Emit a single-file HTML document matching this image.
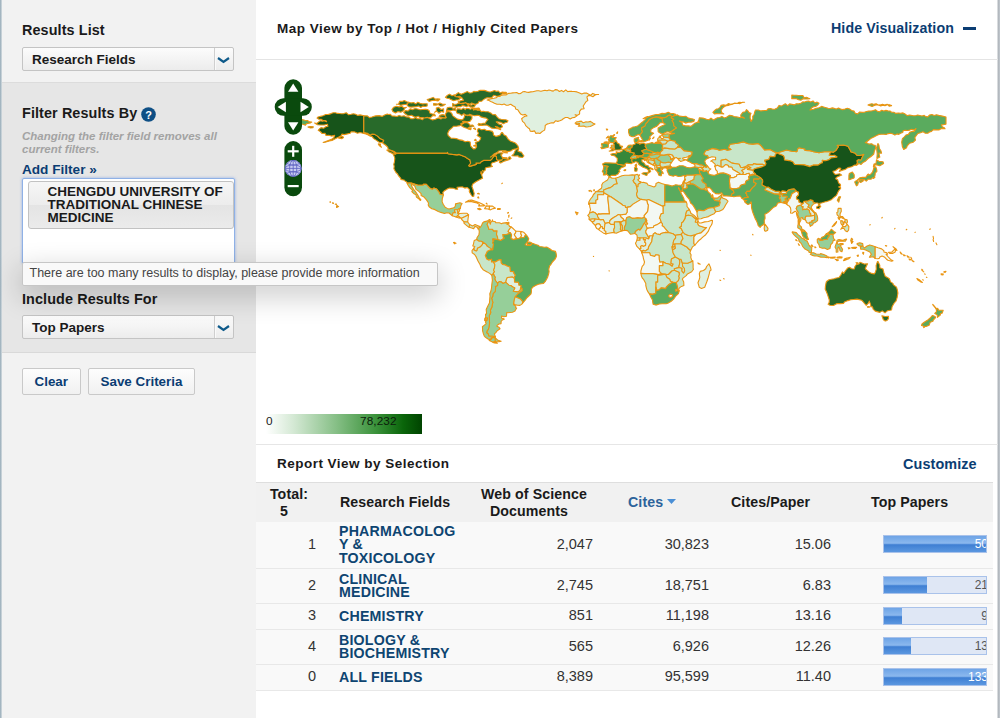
<!DOCTYPE html>
<html lang="en">
<head>
<meta charset="utf-8">
<title>Essential Science Indicators</title>
<style>
*{box-sizing:border-box;margin:0;padding:0}
html,body{width:1000px;height:718px;overflow:hidden;background:#fff}
body{font-family:"Liberation Sans",Arial,sans-serif;color:#222;position:relative;font-size:14px}
.abs{position:absolute}
#leftedge{left:0;top:0;width:2px;height:718px;background:linear-gradient(90deg,#9fb2be 0,#a9bac4 55%,#e9ecee 100%)}
#rightedge{left:997px;top:0;width:3px;height:718px;background:linear-gradient(90deg,#fff 0,#aeb4ba 35%,#c2c8ce 100%)}
#side{left:2px;top:0;width:254px;height:718px;background:#f2f2f2}
#filt{left:2px;top:82px;width:254px;height:271px;background:#e6e6e6;border-top:1px solid #dcdcdc;border-bottom:1px solid #d9d9d9}
.h{font-weight:bold;font-size:14.4px;color:#1a1a1a;white-space:nowrap;letter-spacing:.1px}
.sel{left:22px;width:212px;height:24px;border:1px solid #c4c4c4;border-radius:2px;background:linear-gradient(#fcfcfc,#ececec);font-weight:bold;font-size:13.5px;color:#1a1a1a;line-height:23.5px;padding-left:9px;white-space:nowrap}
.sel i{position:absolute;right:18px;top:0;width:1px;height:22px;background:#cfcfcf;box-shadow:1px 0 0 #fafafa}
.sel svg{position:absolute;right:3px;top:9px}
.note{left:22px;top:130px;width:225px;font-size:11.5px;line-height:13px;font-style:italic;font-weight:bold;color:#a3a3a3}
.lnk{color:#0b3d73;font-weight:bold}
#fbox{left:22px;top:178px;width:213px;height:86px;background:#fff;border:1px solid #8fb1e6;border-radius:2px;box-shadow:0 0 3px rgba(110,150,230,.7)}
#chip{left:28px;top:181px;width:206px;height:48px;border:1px solid #c2c2c2;border-radius:3px;background:linear-gradient(#f6f6f6 0%,#ececec 50%,#e4e4e4 51%,#ebebeb 100%);font-weight:bold;font-size:13.5px;line-height:13.2px;color:#1a1a1a;padding:2.5px 0 0 18.5px}
#tip{left:22px;top:262px;width:416px;height:24px;background:#f9f9f9;border:1px solid #c6c6c6;border-radius:2px;box-shadow:0 9px 28px 2px rgba(0,0,0,.2);font-size:12.5px;line-height:21px;color:#444;padding-left:6.5px;white-space:nowrap}
.btn{top:368px;height:27px;border:1px solid #c9c9c9;border-radius:2px;background:linear-gradient(#fdfdfd,#f1f1f1);font-weight:bold;font-size:13.4px;color:#0b3d73;line-height:25.5px;text-align:center;white-space:nowrap}
#hdrline{left:256px;top:59px;width:742px;height:1px;background:#e4e4e4}
#sepline{left:256px;top:444px;width:742px;height:1px;background:#e6e6e6}
.t13{font-weight:bold;font-size:13.5px;color:#1a1a1a;white-space:nowrap;letter-spacing:.48px}
#thead{left:256px;top:482px;width:737px;height:40px;background:#f1f1f1;border-top:1px solid #dedede}
.th{font-weight:bold;font-size:14.2px;line-height:16.5px;color:#1a1a1a;text-align:center;white-space:nowrap;letter-spacing:.1px}
.row{left:256px;width:737px;background:#f9f9f9;border-bottom:1px solid #e8e8e8}
.num{font-size:14.5px;color:#333;text-align:right;white-space:nowrap;width:80px}
.fld{left:339px;font-weight:bold;font-size:14.2px;line-height:13.6px;color:#0e4571;letter-spacing:.2px}
.bar{left:883px;width:104px;height:18px;background:#dfe7f5;border:1px solid #a9c2ea;overflow:hidden}
.bar b{display:block;height:100%;background:linear-gradient(#6ea4e6 0%,#8bb8ee 45%,#3f7fd3 55%,#5b97e0 100%)}
.bar span{position:absolute;right:-2px;top:0;font-size:12px;line-height:17px;color:#555}
</style>
</head>
<body>
<div class="abs" id="side"></div>
<div class="abs" id="filt"></div>
<div class="abs" id="leftedge"></div>
<div class="abs" id="rightedge"></div>

<div class="abs h" style="left:22px;top:22px">Results List</div>
<div class="abs sel" style="top:47px">Research Fields<i></i><svg width="13" height="7" viewBox="0 0 13 7"><path d="M1 1 L6.5 5 L12 1" fill="none" stroke="#0e5a8a" stroke-width="2.2"/></svg></div>

<div class="abs h" style="left:22px;top:104.5px">Filter Results By</div>
<svg class="abs" style="left:141px;top:106.5px" width="15" height="15" viewBox="0 0 15 15"><circle cx="7.5" cy="7.5" r="7.3" fill="#0e4f85"/><text x="7.5" y="11.6" text-anchor="middle" font-family="Liberation Sans, sans-serif" font-weight="bold" font-size="11" fill="#fff">?</text></svg>
<div class="abs note">Changing the filter field removes all current filters.</div>
<div class="abs lnk" style="left:22px;top:161.5px;font-size:13.6px;white-space:nowrap">Add Filter »</div>
<div class="abs" id="fbox"></div>
<div class="abs" id="chip">CHENGDU UNIVERSITY OF<br>TRADITIONAL CHINESE<br>MEDICINE</div>
<div class="abs h" style="left:22px;top:290.5px">Include Results For</div>
<div class="abs sel" style="top:315px">Top Papers<i></i><svg width="13" height="7" viewBox="0 0 13 7"><path d="M1 1 L6.5 5 L12 1" fill="none" stroke="#0e5a8a" stroke-width="2.2"/></svg></div>
<div class="abs btn" style="left:22px;width:58.5px">Clear</div>
<div class="abs btn" style="left:88px;width:107px">Save Criteria</div>

<div class="abs t13" style="left:277px;top:21px">Map View by Top / Hot / Highly Cited Papers</div>
<div class="abs lnk" style="left:831px;top:20px;font-size:14.2px;white-space:nowrap;letter-spacing:.1px">Hide Visualization</div>
<div class="abs" style="left:963px;top:27px;width:13px;height:3px;background:#0b3d73"></div>
<div class="abs" id="hdrline"></div>

<svg id="map" class="abs" style="left:256px;top:60px" width="741" height="384" viewBox="256 60 741 384"><style>.c0{fill:#f3f8f3}.c1{fill:#e0f0e0}.c2{fill:#c8e6c9}.c3{fill:#96cf99}.c4{fill:#5aab5e}.c5{fill:#36883a}.c6{fill:#286a2a}.c7{fill:#17541a} #map path{stroke:#ea9512;stroke-width:1.1;stroke-linejoin:round}</style><g><path class="c2" d="M608.8,177.1L609.9,176.9L612.2,178.2L615.5,178.3L616.2,179.4L616.4,181.2L617.3,183.8L614.1,184.5L612.8,186L610.4,187.6L608.6,188.1L603.7,189.9L603.7,191.8L595.6,191.8L597.7,191L601.4,188.3L601.9,186.7L601.7,184.9L602.8,182.9L605.7,181.1L607.2,180.3L608.6,178.2Z"><title>MAR</title></path><path class="c2" d="M595.6,191.8L603.7,191.8L603.7,194.8L597.7,194.8L597.7,199.6L595.9,200.3L595.9,203.4L588.7,203.4L588.7,204.3L588.8,202.1L590.5,199L592.5,196.7L593.4,194.5L595,193Z"><title>ESH</title></path><path class="c0" d="M588.7,203.4L595.9,203.4L595.9,200.3L597.7,199.6L597.7,194.8L603.7,194.8L603.7,192.5L610.8,196.7L607.7,196.7L609.3,212.1L609.5,213.9L602.6,213.9L600.1,214.1L598.3,213.9L597.4,215.2L595.2,212.8L593.2,211.9L589.6,213L590.5,209.4L589.8,206.8L589.6,204.5L588.7,204.3Z"><title>MRT</title></path><path class="c2" d="M615.5,178.3L618.4,177.3L621.9,175.8L624.9,175.3L628.6,175.3L632.2,174.9L635.1,175.1L634.6,176.7L634.4,179.1L633.1,180.7L634.6,183.1L635.8,183.8L636.7,187L637.5,191.2L636.5,194.1L637.6,197.6L641.1,199.4L633.1,204.1L630.4,206.6L627.1,207.4L625.5,207.5L625.3,206.1L622.8,205.2L621.7,204.3L610.8,196.7L603.7,192.5L603.7,189.9L608.6,188.1L610.4,187.6L612.8,186L614.1,184.5L617.3,183.8L616.4,181.2L616.2,179.4Z"><title>DZA</title></path><path class="c2" d="M635.1,175.1L637.3,174.3L638.2,175.3L639.6,174.9L638.5,176.7L639.5,178.5L637.8,179.8L639.6,181.6L640.4,181.8L640.4,183.1L638.2,184.3L638,186.7L636.7,187L635.8,183.8L634.6,183.1L633.1,180.7L634.4,179.1L634.6,176.7Z"><title>TUN</title></path><path class="c2" d="M640.4,181.8L642.2,182.5L643.4,182.3L647.1,183.4L648,185L651.2,186L654,187L655.8,185.8L656,183.4L658.5,182.3L661.6,183.4L665,184.5L664.8,187.6L664.8,202.1L664.8,205.7L663,205.7L663,206.6L648.5,199.6L646.7,200.3L641.1,199.4L637.6,197.6L636.5,194.1L637.5,191.2L636.7,187L638,186.7L638.2,184.3L640.4,183.1Z"><title>LBY</title></path><path class="c4" d="M665,184.5L668.5,185L672.1,186.1L673.9,185.4L675.7,184.7L677.5,185L678.1,185.2L681.5,185.2L682.8,188.5L681.5,191.8L680.3,190.9L678.6,187.6L678.6,188.5L680.3,191.2L681.2,193.6L683,196.8L683.9,198.5L684.2,200.3L686.4,202.1L664.8,202.1L664.8,187.6Z"><title>EGY</title></path><path class="c2" d="M664.8,202.1L686.4,202.1L687,203.9L687,206.5L689.3,209.4L688.4,210.3L686.6,211.2L685.7,214.8L685.5,215.9L685.2,218.4L683,222L681.7,222.8L681.3,226.6L679.4,227.5L681.2,228.4L683,232L681.2,234.4L675.7,235.3L675.5,235.7L673,233.8L669.2,232.8L667.6,231.3L665.4,228.8L663.4,226.4L662.1,225.7L662.5,224L661,222.2L660.3,219.1L659.4,218.4L659.9,216.6L661.2,213.5L663,213.5L663,206.6L663,205.7L664.8,205.7Z"><title>SDN</title></path><path class="c0" d="M663,206.6L648.5,199.6L646.7,200.3L647.6,203.9L648.3,205L647.6,211.3L644,215.7L644.2,217.2L645.1,218.2L646,219L646.7,220.2L646.5,222.2L647.6,223.9L645.3,224L647.2,228.4L649.4,228L653.2,227.5L654.1,225.7L657.6,224.4L661,222.2L660.3,219.1L659.4,218.4L659.9,216.6L661.2,213.5L663,213.5Z"><title>TCD</title></path><path class="c0" d="M646.7,200.3L641.1,199.4L633.1,204.1L630.4,206.6L627.1,207.4L627.1,212.3L625.8,214.1L621.3,214.8L619.9,214.8L621.1,217.3L623.3,219L623.9,220.4L626,220.8L626.2,219.1L626.9,217.5L629.5,216.8L632.2,218.4L634.9,218.2L637.6,217.9L642.2,218.2L644.2,217.2L644,215.7L647.6,211.3L648.3,205L647.6,203.9Z"><title>NER</title></path><path class="c1" d="M610.8,196.7L621.7,204.3L622.8,205.2L625.3,206.1L625.5,207.5L627.1,207.4L627.1,212.3L625.8,214.1L621.3,214.8L619.9,214.8L618.2,214.6L615.9,216.2L614.1,217.2L611.5,219L609.9,220.6L609.5,223.1L608.3,222.6L605.2,223.5L604.4,222L603.2,219.5L600.8,219.9L598.8,219.5L598.8,218.4L597.7,217L597.4,215.2L598.3,213.9L600.1,214.1L602.6,213.9L609.5,213.9L609.3,212.1L607.7,196.7Z"><title>MLI</title></path><path class="c2" d="M589.6,213L593.2,211.9L595.2,212.8L597.4,215.2L597.7,217L598.8,218.4L598.8,219.5L594.7,219L592.3,219L589.2,219.5L589,218.2L589.4,217.3L587.8,215.3L588.8,214.4Z"><title>SEN</title></path><path class="c1" d="M589.2,219.5L592.3,219L594.7,219L594.7,220.8L592.3,222Z"><title>GNB</title></path><path class="c1" d="M592.3,222L594.7,220.8L594.7,219L598.8,219.5L600.8,219.9L603.2,219.5L604.4,222L605.2,223.5L604.8,225L604.4,228.2L602.5,228.6L602.3,226.8L600.8,226.6L600.3,225.1L599.2,223.9L597,224L595.4,225.7L594.7,224.8L592.8,223Z"><title>GIN</title></path><path class="c0" d="M595.4,225.7L597,224L599.2,223.9L600.3,225.1L600.8,226.6L600.1,228L598.6,229.5L596.8,228.6L595.6,226.6Z"><title>SLE</title></path><path class="c0" d="M598.6,229.5L600.1,228L600.8,226.6L602.3,226.8L602.5,228.6L604.4,228.2L604.3,230.4L605.9,231.5L605.9,234L603.2,232.9L599.9,230.6Z"><title>LBR</title></path><path class="c1" d="M605.9,234L605.9,231.5L604.3,230.4L604.4,228.2L604.8,225L605.2,223.5L608.3,222.6L609.5,223.1L611,224.4L614.4,224.4L614.6,227.5L613.7,230L614.4,232.8L612.2,232.6L608.6,233.3Z"><title>CIV</title></path><path class="c1" d="M609.5,223.1L609.9,220.6L611.5,219L614.1,217.2L615.9,216.2L618.2,214.6L619.9,214.8L621.1,217.3L623.3,219L623.9,220.4L621.1,222L619.3,221.9L614.4,222L614.4,224.4L611,224.4Z"><title>BFA</title></path><path class="c2" d="M614.4,232.8L613.7,230L614.6,227.5L614.4,224.4L614.4,222L619.3,221.9L620.2,223.3L620.6,226.9L620.4,229.3L621.7,230.9L619.5,231.8L616.2,233.3Z"><title>GHA</title></path><path class="c2" d="M621.7,230.9L620.4,229.3L620.6,226.9L620.2,223.3L619.3,221.9L621.1,222L621,223.9L622.4,225.7L622.4,230.8Z"><title>TGO</title></path><path class="c2" d="M622.4,230.8L622.4,225.7L621,223.9L621.1,222L623.9,220.4L626,220.8L626,223.9L624.4,227.5L624.4,230.4Z"><title>BEN</title></path><path class="c3" d="M624.4,230.4L624.4,227.5L626,223.9L626,220.8L626.2,219.1L626.9,217.5L629.5,216.8L632.2,218.4L634.9,218.2L637.6,217.9L642.2,218.2L644.2,217.2L645.1,218.2L646,219L645.3,219.5L646,221.1L643.4,224.6L642.7,226.2L641.3,228.4L640,230.2L638.5,229.3L637.1,230.2L635.5,231.5L634.9,233.5L632.2,234L630.4,234.2L628.6,232L627.5,230.6L625.7,230.4Z"><title>NGA</title></path><path class="c2" d="M634.9,233.5L635.5,231.5L637.1,230.2L638.5,229.3L640,230.2L641.3,228.4L642.7,226.2L643.4,224.6L646,221.1L645.3,219.5L646,219L646.7,220.2L646.5,222.2L647.6,223.9L645.3,224L647.2,228.4L645.8,231.1L646,232.9L648.3,236.6L648.9,238L648.7,238.9L645.8,238L643.6,238L640,238L637.3,237.8L637.1,235.7L636.7,234.7Z"><title>CMR</title></path><path class="c1" d="M637.3,237.8L640,238L640,240.2L636.9,240.2Z"><title>GNQ</title></path><path class="c1" d="M636.9,240.2L640,240.2L640,238L643.6,238L643.4,239.6L645.6,239.6L644.7,242L645.8,243.1L645.6,245.4L643.1,246.4L642.2,245.6L640.5,246.5L641.1,248.3L639.6,249.1L636.9,246.4L635.5,243.3L636.4,241.5Z"><title>GAB</title></path><path class="c1" d="M639.6,249.1L641.1,248.3L640.5,246.5L642.2,245.6L643.1,246.4L645.6,245.4L645.8,243.1L644.7,242L645.6,239.6L643.4,239.6L643.6,238L645.8,238L648.7,238.9L648.9,238L649.6,235.7L653.2,235.7L652.3,237.6L651.8,241.5L650.3,244L648.5,247.1L648.3,249.1L647.1,249.8L645.6,250.9L643.8,250.7L643.1,250.3L642.4,251.1L641.3,251.1Z"><title>COG</title></path><path class="c0" d="M647.2,228.4L649.4,228L653.2,227.5L654.1,225.7L657.6,224.4L661,222.2L662.5,224L662.1,225.7L663.4,226.4L665.4,228.8L667.6,231.3L669.2,232.8L665.7,232.4L663.8,232.8L661,233.5L660.1,234.6L656.9,234L654.9,232.8L653.2,234.2L653.2,235.7L649.6,235.7L648.9,238L648.3,236.6L646,232.9L645.8,231.1Z"><title>CAF</title></path><path class="c2" d="M641.6,252.5L642.4,251.1L643.1,250.3L643.8,250.7L645.6,250.9L647.1,249.8L648.3,249.1L648.5,247.1L650.3,244L651.8,241.5L652.3,237.6L653.2,235.7L653.2,234.2L654.9,232.8L656.9,234L660.1,234.6L661,233.5L663.8,232.8L665.7,232.4L669.2,232.8L673,233.8L675.5,235.7L675.7,237.8L673.7,240.5L673.2,242.9L673.2,244.5L672.1,246.9L672.5,250L673.2,252.9L675.4,257.1L671.4,259L671,263.4L673.2,264.1L672.1,266.3L669.4,264.3L665.7,263.2L663,261.8L659.9,262.3L659.2,259.2L659,255.2L655.8,254.7L654.7,256.5L650.3,255.2L649.6,252.7L643.1,252.7L641.8,252.9Z"><title>COD</title></path><path class="c0" d="M641.8,252.9L643.1,252.7L649.6,252.7L650.3,255.2L654.7,256.5L655.8,254.7L659,255.2L659.2,259.2L659.9,262.3L663,261.8L663,265.6L659.4,265.6L659.4,271.4L661.9,273.9L658.3,274.6L653.1,273.6L644.9,273.6L640.9,273.4L640.9,271L641.6,268.3L642.2,266.3L643.8,264.7L644.5,262L643.4,258.3L643.1,256.5ZM641.3,251.1L642.4,251.1L641.6,252.5Z"><title>AGO</title></path><path class="c2" d="M659.4,265.6L663,265.6L663,261.8L665.7,263.2L669.4,264.3L672.1,266.3L673.2,264.1L671,263.4L671.4,259L675.4,257.1L679.2,259L679.9,261.6L679.4,264.7L678.8,266.7L679.7,267.4L674.3,268.8L674.6,270.3L671.9,271L668.5,274.5L665.4,274.3L661.9,273.9L659.4,271.4Z"><title>ZMB</title></path><path class="c2" d="M665.4,274.3L668.5,274.5L671.9,271L674.6,270.3L676.3,271L679.2,272.3L679.4,274.6L678.8,276.5L679.4,277.9L678.4,280.6L676.3,282.6L672.8,282.3L670.3,281.2L669.7,279.2L667,277.5Z"><title>ZWE</title></path><path class="c2" d="M665.4,274.3L667,277.5L669.7,279.2L670.3,281.2L672.8,282.3L668.5,284.8L666.5,286.8L665.7,288.6L661.2,287.9L659.4,289.7L657,290.6L655.8,287L655.8,281.9L657.6,281.9L657.6,275.2L661.8,274.6L663.9,274.5Z"><title>BWA</title></path><path class="c2" d="M640.9,273.4L644.9,273.6L653.1,273.6L658.3,274.6L661.9,273.9L665.4,274.3L663.9,274.5L661.8,274.6L657.6,275.2L657.6,281.9L655.8,281.9L655.8,287L655.8,293.5L652.1,294.4L651.1,294.1L649.4,293.9L648,291.9L646.7,289.2L645.8,285.5L645.8,283.5L643.8,279.7L642.2,277.9L641.3,275.6Z"><title>NAM</title></path><path class="c4" d="M649.4,293.9L651.1,294.1L652.1,294.4L655.8,293.5L655.8,287L657,290.6L659.4,289.7L661.2,287.9L665.7,288.6L666.5,286.8L668.5,284.8L672.8,282.3L676.3,282.6L677.5,286.4L677.5,289L677.5,290.6L679.2,290.8L678.4,293.7L675.7,296.2L673.9,298.8L671.2,301.3L668.5,302.9L666.1,303.7L662.1,303.8L659.4,304L655.8,305.1L653.1,304.2L652.7,301.9L652.5,300L650.9,297.3Z"><title>ZAF</title></path><path class="c0" d="M668.5,295.7L670.3,294.1L672.6,294.8L672.5,296.4L670.6,297.5L669.2,297Z"><title>LSO</title></path><path class="c2" d="M675.7,289.2L677.5,289.2L677.5,290.6L675.7,291.3L675.4,290.2Z"><title>SWZ</title></path><path class="c2" d="M679.2,290.8L677.5,290.6L677.5,289L677.5,286.4L676.3,282.6L678.4,280.6L679.4,277.9L678.8,276.5L679.4,274.6L679.2,272.3L676.3,271L674.6,270.3L674.3,268.8L679.7,267.4L682.1,268.3L681.9,271L683.5,273L684.6,271L684.4,268.5L682.6,266.5L682.3,263L683,263L687.5,263.2L689.3,262.5L692.8,261L693.1,264.7L693.1,268.3L693.5,269.2L691.7,271.7L687.5,273.9L686.2,275.6L683,278.1L682.4,279.2L683.7,281.9L683.9,285.5L681.5,286.4L679.4,287.9L678.6,289.2Z"><title>MOZ</title></path><path class="c2" d="M679.7,267.4L678.8,266.7L679.4,264.7L679.9,261.6L679.2,259L681,259.2L682.3,263L682.6,266.5L684.4,268.5L684.6,271L683.5,273L681.9,271L682.1,268.3Z"><title>MWI</title></path><path class="c2" d="M692.8,261L689.3,262.5L687.5,263.2L683,263L682.3,263L681,259.2L679.2,259L675.4,257.1L673.2,252.9L672.5,250L675.4,248L674.8,246.4L674.8,243.8L681,243.8L687.7,247.4L687.9,248.3L690.6,250.5L689.9,252.9L691.1,254.7L690.8,257.4L691.7,260.1Z"><title>TZA</title></path><path class="c2" d="M672.1,246.9L673.2,244.5L674.8,243.8L674.8,246.4L673.7,247.1Z"><title>RWA</title></path><path class="c2" d="M672.1,246.9L673.7,247.1L674.8,246.4L675.4,248L672.5,250Z"><title>BDI</title></path><path class="c2" d="M673.2,244.5L673.2,242.9L673.7,240.5L675.7,237.8L675.5,235.7L675.7,235.3L681.2,234.4L681.9,235.3L683,238.6L682.1,240L681.2,241.6L681,243.8L674.8,243.8Z"><title>UGA</title></path><path class="c2" d="M681,243.8L681.2,241.6L682.1,240L683,238.6L681.9,235.3L681.2,234.4L683,232L684.8,234L688.4,235.5L691.1,235.8L693.9,234.9L695.5,234.9L693.9,236.9L693.9,242L693.9,243.5L694.9,245.1L692.4,246.9L691.3,249.3L690.6,250.5L687.9,248.3L687.7,247.4Z"><title>KEN</title></path><path class="c2" d="M685.5,215.9L688.2,215L690.2,215.5L692,215.7L693.9,217.5L696.4,219.3L695.3,222L697.3,222.2L698.4,225L699.3,225.7L704.7,227.5L706.6,227.5L701.1,232.9L698.4,233.5L695.7,234.4L695.5,234.9L693.9,234.9L691.1,235.8L688.4,235.5L684.8,234L683,232L681.2,228.4L679.4,227.5L681.3,226.6L681.7,222.8L683,222L685.2,218.4Z"><title>ETH</title></path><path class="c2" d="M689.3,209.4L688.4,210.3L686.6,211.2L685.7,214.8L685.5,215.9L688.2,215L690.2,215.5L692,215.7L693.9,217.5L696.4,219.3L697.7,219L695.7,217L693.9,215.2L692,213.9L691.1,213.7L690.2,211.2Z"><title>ERI</title></path><path class="c1" d="M697.7,219L696.4,219.3L695.3,222L697.3,222.2L698,221.1Z"><title>DJI</title></path><path class="c0" d="M698,221.1L697.3,222.2L698.4,225L699.3,225.7L704.7,227.5L706.6,227.5L701.1,232.9L698.4,233.5L695.7,234.4L695.5,234.9L693.9,236.9L693.9,242L693.9,243.5L694.9,245.1L697.5,242L699.2,240.2L701.1,238.7L703.3,236.6L705.7,234.7L708.4,231.1L709.8,227.5L711.6,224.8L712.2,223L712.5,220.6L711.6,220.2L708.4,221.5L704.7,221.9L701.1,223L699.3,223Z"><title>SOM</title></path><path class="c1" d="M708.9,263.8L710.5,267.4L711.1,270.1L709.8,271L709.3,273.7L708,278.3L706.9,281.5L705.7,284.6L704.7,287.3L701.5,288.4L699.3,287.3L698,282.8L699.3,279.2L699.8,277.4L699.3,273.7L700.2,271.4L703.5,270.5L705.7,268.8L706.6,266.5Z"><title>MDG</title></path><path class="c0" d="M575.4,211.9L576.9,214.8L578.1,212.8Z"><title>CPV</title></path><path class="c0" d="M697.9,262.9L700.2,264.3L698.4,263.8ZM719.8,280.1L720.7,280.5ZM723.6,278.6L724.2,279Z"><title>COM</title></path><path class="c4" d="M666.7,168L667.7,167.1L666.7,166.4L670.3,165.8L672.1,167.3L669.4,167.6L667,168.9ZM667,170.4L667.9,172.4L669,174.9L670.6,175.4L673.4,176.3L675,175.3L678.4,176.5L681.2,176.2L684.8,175.3L684.6,176.9L686.1,176.3L686.1,175.3L688.4,175.3L692,175.3L696.4,174.7L700.8,174.5L699.7,172.4L699.3,170.5L700.8,170L698.8,169.3L698.4,167.5L694.8,166.7L691.5,167.6L689,167.8L686.6,167.3L683,165.8L679.4,165.8L676.6,167.1L672.1,167.3L670.3,168.7L667.9,168.7Z"><title>TUR</title></path><path class="c1" d="M684.6,176.9L686.1,176.3L686.1,175.3L688.4,175.3L692,175.3L696.4,174.7L694.4,176L693.9,179.6L689.9,181.4L686.2,183.4L684.4,182.7L684.1,181.6L685.5,179.2L684.8,179.2Z"><title>SYR</title></path><path class="c3" d="M683.2,182L684.1,181.6L685.5,179.2L684.8,179.2Z"><title>LBN</title></path><path class="c3" d="M681.5,185.2L682.8,188.5L683.7,185.8L683.9,183.2L684.4,182.7L684.1,181.6L683.2,182L682.4,184Z"><title>ISR</title></path><path class="c2" d="M682.8,188.5L684.8,189L687.5,187.6L686.6,184.9L690.2,184L690.6,183.6L689.9,181.4L686.2,183.4L684.4,182.7L683.9,183.2L683.7,185.8Z"><title>JOR</title></path><path class="c3" d="M696.4,174.7L700.8,174.5L702,176.7L703.3,178.3L701.8,180.3L702.9,182.1L706.2,184.3L706,185.8L707.6,187.8L706.4,187.6L706,187.4L704,189.2L700.6,189L695.7,185.6L692.8,184.1L690.6,183.6L689.9,181.4L693.9,179.6L694.4,176Z"><title>IRQ</title></path><path class="c2" d="M704,189.2L706,187.4L706.4,187.6L707.3,190.3L705.7,190.3Z"><title>KWT</title></path><path class="c4" d="M682.8,188.5L684.8,189L687.5,187.6L686.6,184.9L690.2,184L692.8,184.1L695.7,185.6L700.6,189L704,189.2L705.7,190.3L707.3,190.3L708.4,192.1L710.5,193.9L711.6,197L713.1,197.9L714.9,200.5L719.4,201L720.3,202.1L719.3,205.7L713.8,207.5L708.4,208.3L706.9,209L703.8,210.8L700.2,210.4L698,210.4L697.1,212.3L695.7,209.7L693.9,206.6L692.5,204.6L690.6,203L689.3,199.4L687,196.7L685.7,194.8L683.9,192.1L682.3,191Z"><title>SAU</title></path><path class="c2" d="M697.1,212.3L698,210.4L700.2,210.4L703.8,210.8L706.9,209L708.4,208.3L713.8,207.5L715.8,211.7L714.2,213.7L711.2,215L708.4,216.6L705.9,217.3L703.5,217.8L701.1,218.8L698.4,219L697.9,217.5L697.1,214.8Z"><title>YEM</title></path><path class="c2" d="M715.8,211.7L713.8,207.5L719.3,205.7L720.3,202.1L719.4,201L720.7,198.1L721.8,196.8L722.5,197.9L725.8,199.2L728,201.2L725.6,205L724.3,207.5L722.9,209.4L719.3,211.2ZM721.2,194.8L721.8,194.3L721.8,195.6Z"><title>OMN</title></path><path class="c3" d="M713.1,197.9L714.9,200.5L719.4,201L720.7,198.1L721.8,196.8L721.2,194.8L719.8,196.1L717.4,198.1L714.9,198.1Z"><title>ARE</title></path><path class="c3" d="M711.6,197L711.6,195.6L712.5,194.7L713.1,196.3L712.7,197.4Z"><title>QAT</title></path><path class="c4" d="M700.8,170L699.3,170.5L699.7,172.4L700.8,174.5L702,176.7L703.3,178.3L701.8,180.3L702.9,182.1L706.2,184.3L706,185.8L707.6,187.8L709.3,187.4L711.6,189.6L712.9,191.6L715.6,193.6L718.9,193.9L721.6,192.8L722.9,194.8L723.4,195.9L726.5,195.9L731.2,196.3L731.6,194.3L734.1,192.7L733.4,190.7L730.1,188L730,184.9L729.4,181.1L730.1,177.4L730.5,175.6L727.1,174L723.4,172.7L720.2,173.1L717.3,174.3L713.8,175.4L711.1,174.9L708.4,173.8L708.2,172.4L706.6,170.5L703.8,171.4Z"><title>IRN</title></path><path class="c2" d="M692,163.3L696.6,163.6L699.3,164.7L702,164.9L703.8,166L703.7,167.5L701.1,167.3L698.4,167.5L694.8,166.7L695.1,165.6L693.9,164Z"><title>GEO</title></path><path class="c2" d="M698.4,167.5L701.1,167.3L702.2,168.4L703.8,170.4L703.8,171.4L702.6,170.4L700.8,170L698.8,169.3Z"><title>ARM</title></path><path class="c2" d="M703.8,166L706.2,167.3L707.6,166.2L709.3,168.4L710.9,168.9L708.9,170.7L708.2,172.4L706.6,170.5L703.8,171.4L703.8,170.4L702.2,168.4L701.1,167.3L703.7,167.5Z"><title>AZE</title></path><path class="c2" d="M708.4,158L707.5,155.8L704.7,154.9L703.8,154L704.7,152.2L705.7,150.8L707.8,150.2L712,148.4L716.5,149.1L719.3,150.2L724.7,149.3L727.4,150.2L731,149.5L728.3,147.7L730.1,144.2L737.4,143.3L743.7,141.9L748.3,143.7L752.8,144.1L758.2,143.5L760.8,145.3L764.6,149.9L770,149.5L774.6,152L777.8,152.8L775.5,154.2L774.9,156.8L770,156.4L768.8,159.5L764.6,160.4L766,163.8L765,165.5L762.8,164.4L756.8,164.4L753.7,163.6L752.8,164.9L748.3,164.7L747.4,165.8L744.6,167.1L742.8,167.6L740.5,167.3L739.2,164.2L731.9,163.1L725.8,159.3L721.1,160.4L721.1,167.1L717.4,165.3L714.7,166.4L715.3,164.4L712,161.3L710.7,161.1L712.9,159.8L715.6,159.8L715.6,157.3L712,156.8Z"><title>KAZ</title></path><path class="c2" d="M721.1,160.4L725.8,159.3L731.9,163.1L739.2,164.2L740.5,167.3L742.8,167.6L744.6,167.1L747.4,165.8L751,167.8L748.3,169.1L747.4,167.6L745.2,168L744.6,169.1L741.7,170.4L743.6,172.7L742.5,174.5L740.1,174.2L738.5,172.7L732.9,169.5L731.8,167.3L728.5,166.9L728.3,165.5L725.6,164.6L722.9,167.1L721.1,167.1Z"><title>UZB</title></path><path class="c0" d="M714.7,166.4L717.4,165.3L721.1,167.1L722.9,167.1L725.6,164.6L728.3,165.5L728.5,166.9L731.8,167.3L732.9,169.5L738.5,172.7L740.1,174.2L737,174.7L736.5,176.2L733.4,177.8L730.1,177.4L730.5,175.6L727.1,174L723.4,172.7L720.2,173.1L717.3,174.3L717.3,171.3L715.6,169.5L715.3,167.6Z"><title>TKM</title></path><path class="c2" d="M765,165.5L762.8,164.4L756.8,164.4L753.7,163.6L752.8,164.9L748.3,164.7L747.4,165.8L751,167.8L748.3,169.1L747.4,169.5L753.2,170.4L753.5,169.5L755.3,168.5L759,167.6L761.7,166.9Z"><title>KGZ</title></path><path class="c1" d="M742.5,174.5L743.6,172.7L741.7,170.4L744.6,169.1L745.2,168L747.4,167.6L748.3,169.1L747.4,169.5L753.2,170.4L753.5,172.2L755.5,174L755.3,174.5L752.4,174.3L749.4,175.4L749.2,173.3L746.8,173.8L745.6,174.5Z"><title>TJK</title></path><path class="c0" d="M730.1,177.4L733.4,177.8L736.5,176.2L737,174.7L740.1,174.2L742.5,174.5L745.6,174.5L746.8,173.8L749.2,173.3L749.4,175.4L752.4,174.3L755.3,174.5L750.1,175.6L748.6,176.7L749.2,178.5L748.5,180L746.5,180.5L745.6,182L745.2,184.1L742.8,184.5L740.5,185.4L739.7,187.8L735.6,188.7L732.9,188.7L730.1,188L730,184.9L729.4,181.1Z"><title>AFG</title></path><path class="c4" d="M731.2,196.3L731.6,194.3L734.1,192.7L733.4,190.7L730.1,188L732.9,188.7L735.6,188.7L739.7,187.8L740.5,185.4L742.8,184.5L745.2,184.1L745.6,182L746.5,180.5L748.5,180L749.2,178.5L748.6,176.7L750.1,175.6L755.3,174.5L757,175.4L760.6,177.6L758.8,179.1L753.7,179.1L753.7,182.1L756.3,183.4L754.8,185.8L752.6,187.6L751,189.6L749.9,191.4L747.2,191.2L745.6,193L746.8,193.9L746.6,195.4L748.5,197.2L744.3,197.9L743.2,199L741.9,198.5L741,197L740.1,195.9L736.5,196.3L733.9,196.7Z"><title>PAK</title></path><path class="c4" d="M743.2,199L744.3,197.9L748.5,197.2L746.6,195.4L746.8,193.9L745.6,193L747.2,191.2L749.9,191.4L751,189.6L752.6,187.6L754.8,185.8L756.3,183.4L753.7,182.1L753.7,179.1L758.8,179.1L760.6,177.6L762.6,179.8L762.8,182.1L762.2,182.9L762.2,184.9L766.6,187.2L764.8,189.8L770.6,192.3L773.7,193.6L779.3,194.1L779.3,191.4L780.7,192.5L782.4,193.6L786.4,193.4L786.5,192.1L788.2,190.1L791.8,189L794,188.7L796,190.7L795.4,191.8L794,192.5L792,193.8L791.1,196.3L790,198.7L788.7,198.5L788.9,200.1L787.4,202.1L786.9,199.9L785.6,200.3L784.9,199L786.2,197.9L787.1,196.8L786.4,196.3L782.4,196.1L782.4,194.8L779.8,193.9L779.3,195.2L780.7,196.3L779.3,197.6L780.7,199.9L781.1,202.5L779.5,202.6L777.3,203.2L777.1,204.5L776.2,205.9L773.7,207.2L771.9,208.8L768.8,211.9L766.8,213.2L764.8,214.3L765.1,218.2L764.2,220.6L764.4,223.3L762.8,225.1L761.3,225.9L760.1,227.3L758.2,225.7L757.7,223.9L756.4,220.6L755.2,218.6L753.7,214.8L752.4,211.2L751.5,207.5L751.4,203.7L751,201.7L750.3,203.5L747.9,204.5L745,202.3L744.5,201.6L746.8,200.5L745,200.6L743.7,199.9Z"><title>IND</title></path><path class="c2" d="M764.8,189.8L766.6,187.2L768.2,187L771.9,189.6L775.5,191.2L779.3,191.4L779.3,194.1L773.7,193.6L770.6,192.3Z"><title>NPL</title></path><path class="c1" d="M780.7,192.5L782.4,193.6L786.4,193.4L786.5,192.1L785.5,191.2L782.7,190.7L781.8,191Z"><title>BTN</title></path><path class="c3" d="M781.1,202.5L780.7,199.9L779.3,197.6L780.7,196.3L779.3,195.2L779.8,193.9L782.4,194.8L782.4,196.1L786.4,196.3L787.1,196.8L786.2,197.9L784.9,199L785.6,200.3L786.9,199.9L787.4,202.1L783.3,202.3L784.2,201.2L786,201.6L786.9,204.5L786.9,203.9Z"><title>BGD</title></path><path class="c2" d="M764.4,224.4L765,224.2L766.8,226.6L768,228.4L767.7,230.2L765.7,231.3L764.6,230.8L764.2,228.4L764.4,226.6Z"><title>LKA</title></path><path class="c0" d="M786.9,204.5L786.9,203.9L787.4,202.1L788.9,200.1L788.7,198.5L790,198.7L791.1,196.3L792,193.8L794,192.5L795.4,191.8L796,190.7L797.4,191.9L798.5,192.1L798.5,195L796.5,197L796.5,198.7L798.9,199.9L799.1,202.1L801.1,203L803,203.5L801.1,205.2L800,205.2L797.2,206.3L796.2,208.4L796.9,209.9L798.3,212.4L797.6,214.4L799.4,218.4L799.2,220.8L798.5,223.1L798.3,223.9L798.1,221.1L798.3,219.3L797.2,216.6L796.5,213.9L796.5,212.1L795.1,211.2L793.6,212.3L792.3,213.3L790.5,213L790.9,210.3L790.5,207.9L789.3,206.1L788.2,205.5Z"><title>MMR</title></path><path class="c3" d="M798.3,223.9L798.5,223.1L799.2,220.8L799.4,218.4L797.6,214.4L798.3,212.4L796.9,209.9L796.2,208.4L797.2,206.3L800,205.2L801.1,205.2L802,206.6L803.2,206.6L802.7,209.7L804.7,209L805.6,209.5L807,208.6L809.4,210.3L809.6,212.3L810.8,213.9L811,215.7L810.3,216.1L806.3,216.2L805.4,217.3L805.2,219.5L806.1,220.8L804.9,219.7L802.7,219L802.5,217.5L800.9,217.7L800.9,220.2L799.4,223L799.4,225.1L801.4,226.8L801.8,228.9L804.1,230.2L804.7,230.8L802.9,231.7L801.4,230L801.1,230.4L800.3,229.3L797.8,227.7L797.8,225.7Z"><title>THA</title></path><path class="c1" d="M801.1,205.2L803,203.5L804,201.2L804.9,201.4L806.1,202.6L808.1,204.1L809.2,205L807.9,207L809.9,208.1L812.7,211.2L814.5,213L814.7,214.8L814.5,215.3L811.8,215.9L810.3,216.1L811,215.7L810.8,213.9L809.6,212.3L809.4,210.3L807,208.6L805.6,209.5L804.7,209L802.7,209.7L803.2,206.6L802,206.6Z"><title>LAO</title></path><path class="c3" d="M804.9,201.4L806.3,201L808.1,201L810.5,199.7L813,200.6L813,202.1L815.4,203L813.2,204.3L811.8,205.9L811.2,207.9L812.7,210.1L814.5,212.1L815.9,213L817.2,215.7L817.7,218.4L817.6,220.6L815.4,222.4L813.6,223.1L813,223.9L812.7,224.8L810.3,226.4L809.6,224.2L809,223.1L810.1,222L812.1,222L811.6,220.8L814.5,219.7L814.5,215.3L814.7,214.8L814.5,213L812.7,211.2L809.9,208.1L807.9,207L809.2,205L808.1,204.1L806.1,202.6L804.9,201.4Z"><title>VNM</title></path><path class="c1" d="M806.1,220.8L805.2,219.5L805.4,217.3L806.3,216.2L810.3,216.1L811.8,215.9L814.5,215.3L814.5,219.7L811.6,220.8L812.1,222L810.1,222L809,223.1L807.4,223L806.3,222Z"><title>KHM</title></path><path class="c4" d="M801.1,230.4L801.4,230L802.9,231.7L804.7,230.8L807,233.3L807,235.7L808.5,239.5L807.2,239.6L804.5,238L803.2,236.7L802.3,234.7L801.6,232.4ZM818.3,238.4L820.8,239.3L821.5,237.6L824.4,236.2L826.3,233.8L828.1,232.9L829.9,231.1L831.3,229.3L833,230.6L833.7,231.5L835.7,232.4L834.2,233.8L832.8,234.4L829.5,234.2L829,236.6L827.7,238L827.5,239.3L824.4,239.5L822.6,240.2L819.9,240.4Z"><title>MYS</title></path><path class="c3" d="M818.3,238.4L819.9,240.4L822.6,240.2L824.4,239.5L827.5,239.3L827.7,238L829,236.6L829.5,234.2L832.8,234.4L833.3,236.6L833.5,238.4L835.1,240.2L833.2,240.5L832.6,242.9L830.8,244.7L830.4,246.5L829.9,248.5L827.4,249.4L824.4,248L822.3,248.2L819.6,247.3L819,244.7L817.4,242.5L817.2,239.6ZM792.3,231.8L796.3,232.6L797.8,234.4L800.5,236.6L801.6,238L803.4,238.7L805.4,240.2L807.2,241.3L807.8,242.5L809,245.1L809.9,246.4L811.8,247.4L811.6,250.2L811.4,252.5L809.2,252.5L808.7,251.1L805,249.1L802.7,246.5L801.4,243.6L799.2,241.5L798.5,238.9L795.8,236.6L793.8,234.6L792.2,232.4ZM810.3,254.3L811.8,252.7L813.6,252.7L816.3,254L819.9,254.3L820.6,253.6L823.7,254.5L827,256.1L827.2,257.8L824.4,257.2L820.8,257.1L817.2,256L814.5,256L812.5,255.4ZM828.1,256.9L829.3,257.2L828.4,258ZM829.9,257.2L831.2,257.4L830.3,258.1ZM831.3,257.4L835.3,257.1L834.4,258L831.7,258.3ZM837,257.4L839.6,256.8L842.2,257.1L841.7,258L837.1,258ZM843.5,260.7L844.4,259L846.2,258.3L846,259.8L844.4,260.5ZM835.3,259.4L838.6,260L837.1,260.7ZM837.1,240.2L839,239.6L842.6,240.4L845.3,239.3L846.6,239.1L845.3,241.1L842.6,241.3L839,241.1L837.5,242L837.1,243.6L838.8,244.5L839.9,243.6L843.1,243.6L843.3,244.2L840.4,245.3L841.3,247.4L842.6,249.3L841.9,251.8L840,250.7L839.7,249.1L838.8,247.4L839,246.9L837.9,247.4L837.9,250.2L837.9,252L836.2,252.2L836.2,249.3L835,247.1L835.9,244.4L836.8,242ZM850.7,240.4L851.5,238.2L852.7,239.3L851.7,241.1L853.1,241.5L851.7,243.5ZM851.7,247.6L854.2,247.3L856.7,247.4L855.3,248.5L852,248.3ZM848.2,247.8L850.2,248L848.9,248.9ZM857.1,243.5L859.8,242.7L862.7,243.6L863.1,246.5L864.3,248L867.1,246L869.8,244.9L872.5,245.8L875.2,246.7L875.2,258.5L873.1,256.7L870.2,257.2L869.4,257.2L870.7,255.1L871.4,254.3L869.8,252L866.2,250.2L863.4,249.3L860.7,249.3L860.4,247.1L862.4,246L859.3,246L857.1,244.4ZM862.9,252.2L863.8,252.5L863.4,254.3L862.7,253.2ZM857.1,255.6L858.4,255.1L858,256.5ZM811.8,244.9L813,246.5L811,245.8ZM814.8,246.7L815.9,247.4L815,247.8ZM796,239.5L797.1,240.9L795.6,240ZM798.3,243.8L799.6,245.3L798.9,245.1Z"><title>IDN</title></path><path class="c1" d="M846.2,258.3L850.4,257.2L848.9,258.7L846,259.8Z"><title>TLS</title></path><path class="c2" d="M826.3,233.8L828.1,232.9L828.6,234L827.4,234.7Z"><title>BRN</title></path><path class="c2" d="M838.2,208.4L841.1,208.4L841.3,211.2L840,213.9L840.2,216.2L842.6,216.6L844.6,219.1L843.1,218.4L841.7,217.7L839,217L838.2,215.7L837.1,214.8L836.8,212.4L837.9,211.9L837.9,210.3ZM837.9,217.7L839.9,218.1L839.3,219.7ZM832.1,226.8L834.5,225.2L836.2,223L836.6,221.5L834.4,223.9ZM840.8,220.6L842.8,221.1L843.1,223.9L842.6,225.5L841.5,224.4L840.8,223ZM844.9,219.3L847.1,219.9L847.5,222L846.6,223.5L845.1,222.4ZM840.8,229.3L842.6,226.6L845.3,226.6L847.1,224.2L848.9,226.6L848.6,230.2L847.1,231.8L845.3,230.8L844,228.4L841.7,228.2ZM843.3,223L844.4,221.7L843.7,224.6Z"><title>PHL</title></path><path class="c4" d="M839,196.7L840.6,196.7L839.5,199.3L838.8,202.1L837.3,200.3Z"><title>TWN</title></path><path class="c4" d="M855.3,181.2L857.1,180.5L858.5,182.1L857.6,185L856.4,185.8L855.6,184L854.7,182.1ZM859.8,180.3L863.4,179.8L863.1,181.1L860.7,182.5L859.5,181.8ZM856.9,180.3L859.8,177.8L862.5,177.4L865.8,177.4L867.6,174.5L868.5,174L868,175.3L870.7,174.2L872.5,172.2L873.4,169.5L874,167.3L875.8,166.9L876.7,169.5L876.9,171.3L875.2,173.1L875.1,175.1L874.5,176.7L874.9,177.3L873.4,178.5L873.1,177.4L871.2,179.1L869.8,179.2L868,179.2L867.6,179.8L866.2,181.2L864.5,179.8L862.5,179.2L859.8,179.8L857.1,180.5ZM873.4,166.7L874,164L876,163.5L876.5,159.8L878.9,161.3L883,161.7L883.6,163.5L879.8,165.8L876.1,164.7L874.9,164.9L874.1,166.7Z"><title>JPN</title></path><path class="c4" d="M849.3,173.4L852.4,172L854.2,174.9L854.2,177.6L853.5,178.3L851.1,179.1L848.8,179.6L848.9,177.4L848.9,175.6Z"><title>KOR</title></path><path class="c2" d="M777.8,152.8L781.8,151.5L786.4,150L791.8,151.3L796.9,151.7L797.8,148.6L799.1,147.7L804.9,149L805,150.4L809.9,150.6L813.6,151.7L819,152.8L824.4,151.7L831.2,151.7L829.9,153.5L829.2,155.1L832.4,155.5L834.4,155.3L837,156.8L836.6,157.3L831,158L829,159.7L825.5,160.7L822.3,160.4L822.5,162.7L820.8,163.3L818.1,165.1L813.6,165.1L809.9,166.6L804.1,164.9L800.9,164.7L794.5,164.4L792.7,161.8L789.1,160.6L784.4,160L784.5,158.6L783.6,155.8L779.1,154Z"><title>MNG</title></path><path class="c7" d="M856.4,165.1L857.5,163.1L857.1,160.7L858.5,159.8L860.9,160.2L862.5,156.8L863.8,154.4L859.8,155.5L857.1,155.5L855.3,153.3L850.7,151.7L850.7,151L848,146.2L843.5,145L839.9,145.3L837.1,145.3L838.4,146.8L837.1,148.6L835.7,150.6L833.2,152.2L831.2,151.7L829.9,153.5L829.2,155.1L832.4,155.5L834.4,155.3L837,156.8L836.6,157.3L831,158L829,159.7L825.5,160.7L822.3,160.4L822.5,162.7L820.8,163.3L818.1,165.1L813.6,165.1L809.9,166.6L804.1,164.9L800.9,164.7L794.5,164.4L792.7,161.8L789.1,160.6L784.4,160L784.5,158.6L783.6,155.8L779.1,154L777.8,152.8L775.5,154.2L774.9,156.8L770,156.4L768.8,159.5L764.6,160.4L766,163.8L765,165.5L761.7,166.9L759,167.6L755.3,168.5L753.5,169.5L753.2,170.4L753.5,172.2L755.5,174L755.3,174.5L757,175.4L760.6,177.6L762.6,179.8L762.8,182.1L762.2,182.9L762.2,184.9L766.6,187.2L768.2,187L771.9,189.6L775.5,191.2L779.3,191.4L780.7,192.5L781.8,191L782.7,190.7L785.5,191.2L786.5,192.1L788.2,190.1L791.8,189L794,188.7L796,190.7L797.4,191.9L798.5,192.1L798.5,195L796.5,197L796.5,198.7L798.9,199.9L799.1,202.1L801.1,203L803,203.5L804,201.2L804.9,201.4L806.3,201L808.1,201L810.5,199.7L813,200.6L813,202.1L815.4,203L818.1,203L818.6,205.2L819.9,205.2L819.7,203.4L822.3,202.8L825.4,201.7L826.6,201.6L829,200.8L831.7,199.4L833.7,197.6L836.4,195.4L838.4,191.2L840.6,188.5L840.6,187.6L838.6,187L840.6,186L840.4,184.5L838.6,182.9L837.7,179.8L835.7,178.7L836.4,177.4L837.7,176.7L841.7,175.1L839.7,173.8L835.3,174.5L833.5,172.7L833,171.3L835.3,170.7L839,168L840.8,168.4L839.3,171.6L841.7,170.4L845.1,169.5L848,167.6L851.7,166.7L854.7,165.1ZM816.6,207L819,205.5L820.8,206.3L819,208.8L816.6,208.3Z"><title>CHN</title></path><path class="c4" d="M603.5,166L604.6,165.6L607.2,166L608.3,166.6L607,167.6L607,169.5L606.8,170L605.9,170.2L606.8,171.3L606.3,172.4L606.8,172.7L605.9,174L606.1,174.5L605.2,174.9L603.4,174.9L603.5,172.4L602.3,171.8L603.2,169.5L603.7,167.6Z"><title>PRT</title></path><path class="c5" d="M603.5,166L602.6,164L605,162.7L609,162.9L612.6,163.1L616.2,163.3L618.2,164.2L620.8,164.6L622.8,165.1L625.3,165.1L625.3,166L623.5,166.9L621.1,167.6L620.8,168.4L619,170.4L619.9,171.8L618.6,172.5L618.2,173.8L616.1,175.1L615.5,175.4L611.5,175.4L609.9,176.5L609.3,176.7L608.1,175.6L607,174.5L606.1,174.5L605.9,174L606.8,172.7L606.3,172.4L606.8,171.3L605.9,170.2L606.8,170L607,169.5L607,167.6L608.3,166.6L607.2,166L604.6,165.6ZM623.9,170.2L625.3,169.6L625.8,170L625.1,170.7L623.9,170.5ZM588.8,190.7L590.3,190.3L589.6,191.2ZM590.8,191L591.8,191L591.4,191.8ZM593.6,190.1L594.5,189.9L594.1,191Z"><title>ESP</title></path><path class="c5" d="M616.2,163.3L617.3,161.1L617.3,159.1L617.5,158.6L615.9,157.1L615.5,156.4L614.4,155.8L611.5,155.3L610.8,154.2L613.2,153.5L616.6,153.9L616.1,151.9L617.1,151.9L617.5,152.4L619.7,152.2L622.2,151.1L622.4,149.7L624,149.3L625.3,150L627.1,151.3L628.2,151.3L630,152.2L631.1,152.2L634.4,153.1L633.3,155.7L632.2,156L630.6,157.8L630.6,158.2L631.8,158.6L632.2,158.8L631.8,160.2L632.2,161.8L633.1,162.6L631.5,163.6L629.3,163.5L626.8,163.1L625.1,163.8L625.3,165.1L622.8,165.1L620.8,164.6L618.2,164.2ZM635.1,165.1L636.5,164L636.7,165.8L636.2,166.9L635.3,166.4Z"><title>FRA</title></path><path class="c6" d="M609.2,151.1L613.2,150.8L614.1,150L617.1,150L620,149.9L622,149.1L621,148.6L622.6,146.4L619.9,145.9L620,145L619.3,144.1L617.3,143L616.6,141.3L615.9,140.8L615,141.7L613.9,142.2L613.3,143.5L614.2,144.4L613.9,145.1L614.1,145.9L613.9,146.8L614.1,147.7L614.6,148.4L613.9,149.1L611.9,149.1L610.3,150.8Z"><title>ENG</title></path><path class="c3" d="M613.9,145.1L611.3,145.3L611.2,146.1L612.1,147L610.1,147.9L614.1,148.8L614.6,148.4L614.1,147.7L613.9,146.8L614.1,145.9Z"><title>WLS</title></path><path class="c4" d="M615.9,140.8L614.1,140.4L614.8,139.9L615.7,138.6L616.2,137.5L612.2,137.5L613.9,135.7L610.4,135.7L609,137.7L609.3,139.5L608.3,139.2L609.3,141.5L610.4,142.2L610.8,142.6L613.2,142.4L613.9,142.2L615,141.7ZM606.3,138.1L608.3,136.1L608.1,137.5ZM616.6,133.2L617.7,131.9L617.3,133.4ZM613.5,135L614.6,134.6L614.2,135.4Z"><title>SCT</title></path><path class="c3" d="M605,143.2L606.3,142.2L608.6,141.9L609.5,143L608.4,143.9L606.3,143.7Z"><title>NIR</title></path><path class="c4" d="M608.4,143.9L608.4,145.3L608.3,147.1L607,147.5L604.4,148.1L601.7,148.6L600.8,147.5L602.3,146.6L602.3,145.5L601.4,145L601.7,143.5L604.1,143.3L604.1,142.2L606.3,141.7L606.3,142.2L605,143.2L606.3,143.7Z"><title>IRL</title></path><path class="c3" d="M624,149.3L625.7,148.8L627.3,148.8L628.6,148.6L630,149.5L630.4,150L630.9,150.8L630,152.2L628.2,151.3L627.1,151.3L625.3,150Z"><title>BEL</title></path><path class="c4" d="M625.7,148.8L626.8,147.7L627.8,146.1L628.6,145.3L630.4,145.1L632.4,145.3L632.2,146.6L631.8,147.7L630.4,148.1L630.4,150L630,149.5L628.6,148.6L627.3,148.8Z"><title>NLD</title></path><path class="c6" d="M632.4,145.3L634,144.6L635.1,144.2L635.1,142.4L637.5,142.6L637.6,143.2L639.5,143.3L639.5,144.1L642.2,143.3L643.8,143L645.3,144.2L645.6,145.3L645.1,146.2L646.2,147.7L646.7,149.5L645.4,149.5L641.8,150.8L642.2,151.5L644.5,153.5L643.1,154.4L643.1,155.8L641.6,155.7L638.5,156L636.9,155.8L635.1,155.3L633.3,155.7L634.4,153.1L631.1,152.2L630,152.2L630.9,150.8L630.4,150L630.4,148.1L631.8,147.7L632.2,146.6Z"><title>DEU</title></path><path class="c4" d="M635.1,142.4L634.2,141.2L634.2,139L635.1,138.4L638.7,137.3L638.2,139.2L639.3,139.9L637.6,141.3L637.5,142.6ZM639.5,141L642.4,140.4L642.2,141.9L639.8,141.9ZM637.3,141.7L639.1,141.5L638.5,142.2Z"><title>DNK</title></path><path class="c3" d="M630.6,158.2L630.6,157.8L632.2,156L633.3,155.7L635.1,155.3L636.9,155.8L636.7,156.6L638.4,156.9L638.4,157.7L636.4,157.8L635.8,158.9L634.7,158.2L633.8,158.8L632.2,158.8L631.8,158.6Z"><title>CHE</title></path><path class="c4" d="M636.9,155.8L638.5,156L641.6,155.7L643.1,155.8L643.1,154.4L644.5,153.5L646.7,153.1L650.2,153.9L650.5,154.9L649.4,155.8L648.7,156.9L646,157.8L644.3,157.7L642,157.3L641.4,156.8L638.4,156.9L636.7,156.6Z"><title>AUT</title></path><path class="c5" d="M633.1,162.6L632.2,161.8L631.8,160.2L632.2,158.8L633.8,158.8L634.7,158.2L635.8,158.9L636.4,157.8L638.4,157.7L638.4,156.9L641.4,156.8L642,157.3L644.3,157.7L644.3,159.3L641.8,159.8L642,161.8L644.2,163.1L645.3,165.1L648.5,166L648.5,166.9L652.1,168.4L653.1,169.3L652.9,169.8L650.3,168.5L649.6,169.8L650.7,171.3L649.4,172.5L648,173.3L648.3,171.8L648.5,170.4L647.8,169.5L646.3,168.4L645.3,168L643.1,167.3L641.6,166.2L639.6,165.1L638.5,164L638,162.4L635.6,161.5L634.2,162.4ZM642,173.4L643.6,172.7L647.8,172.5L646.9,175.4L645.4,175.1L642.2,173.8ZM634.4,167.8L636.2,167.3L637.3,168.5L636.9,170.9L635.8,171.3L634.7,170.9L634.7,168.9Z"><title>ITA</title></path><path class="c4" d="M641.8,150.8L645.4,149.5L646.7,149.5L648.9,150.2L650.2,150.8L653.2,152L653.6,152.2L652.1,153.3L650.2,153.9L646.7,153.1L644.5,153.5L642.2,151.5Z"><title>CZE</title></path><path class="c4" d="M645.3,144.2L648.9,143.5L652.1,142.6L653.4,143.3L655,143.3L660.9,143.3L662.1,144.1L662.8,145.9L662.3,147.5L662.3,148.4L663,149.9L660.5,152.2L660.5,152.9L657.6,152.4L655.4,152.8L653.6,152.2L653.2,152L650.2,150.8L648.9,150.2L646.7,149.5L646.2,147.7L645.1,146.2L645.6,145.3Z"><title>POL</title></path><path class="c3" d="M650.2,153.9L652.1,153.3L653.6,152.2L655.4,152.8L657.6,152.4L660.5,152.9L659.6,154.2L656.7,154L654,154.8L651.8,155.3L650.5,154.9Z"><title>SVK</title></path><path class="c3" d="M648.7,156.9L649.4,155.8L650.5,154.9L651.8,155.3L654,154.8L656.7,154L659.6,154.2L661,154.9L658,157.8L656.3,158.2L653.6,158.8L651.4,158.8L649.4,157.7Z"><title>HUN</title></path><path class="c3" d="M644.3,159.3L644.3,157.7L646,157.8L648.7,156.9L649.4,157.7L647.8,158.2L647.2,159.5L646,159.3Z"><title>SVN</title></path><path class="c2" d="M644.3,159.3L644,159.5L644.2,160.2L644.7,160.7L645.4,159.8L646.5,160.4L647.1,161.8L648.5,163.1L651.4,164.2L653.1,165.1L652.9,164.7L651.4,164L648.9,162.2L648.2,160.7L648.2,160L650.3,160L652.1,160.2L654,160.6L654.7,160L653.6,158.8L651.4,158.8L649.4,157.7L647.8,158.2L647.2,159.5L646,159.3Z"><title>HRV</title></path><path class="c2" d="M648.2,160L650.3,160L652.1,160.2L654,160.6L654.7,161.7L654.9,162.9L653.1,164.7L652.9,164.7L651.4,164L648.9,162.2L648.2,160.7Z"><title>BIH</title></path><path class="c3" d="M653.6,158.8L656.3,158.2L658.5,160L660.3,160.9L660.7,161.8L660.1,164L660.1,165.3L658.5,165.5L656.9,166L655.8,164.6L654.3,163.1L654.9,162.9L654.7,161.7L654,160.6L654.7,160Z"><title>SRB</title></path><path class="c2" d="M653.1,165.1L653.1,164.7L654.9,162.9L654.3,163.1L655.8,164.6L654.7,166Z"><title>MNE</title></path><path class="c2" d="M654.7,166L655.8,164.6L656.9,166L656.7,167.1L657.6,168L657,169.3L655.8,170L654.7,168.9L654.9,167.1Z"><title>ALB</title></path><path class="c2" d="M656.9,166L658.5,165.5L660.1,165.3L661.2,167.1L659.4,167.5L657.6,168L656.7,167.1Z"><title>MKD</title></path><path class="c4" d="M655.8,170L657,169.3L657.6,168L659.4,167.5L661.2,167.1L663.9,166.9L666.7,166.4L667.7,167.1L666.7,168L663.8,167.8L662.8,168.7L662.5,169.6L661.2,168.5L660.5,168.9L661.6,170.9L663,172.7L663.2,173.6L661.6,173.1L661.2,174L661.6,174.3L661.2,175.8L660.3,175.8L658.9,175.3L658.1,173.4L659,172.5L657.8,172.5L657,171.4Z"><title>GRC</title></path><path class="c2" d="M660.7,161.8L663,162.7L665.7,162.7L668.5,162L671.4,162.7L670.1,164.4L670.3,165.8L666.7,166.4L663.9,166.9L661.2,167.1L660.1,165.3L660.1,164Z"><title>BGR</title></path><path class="c3" d="M656.3,158.2L658,157.8L661,154.9L663.9,155.1L667.7,154.4L670.5,157.1L670.6,159.5L673.4,159.8L671.4,162.7L668.5,162L665.7,162.7L663,162.7L660.7,161.8L660.3,160.9L658.5,160Z"><title>ROU</title></path><path class="c1" d="M667.7,154.4L670.3,154.4L672.5,155.1L674.1,157.8L670.6,159.5L670.5,157.1Z"><title>MDA</title></path><path class="c2" d="M660.5,152.9L659.6,154.2L661,154.9L663.9,155.1L667.7,154.4L670.3,154.4L672.5,155.1L674.1,157.8L670.6,159.5L673.4,159.8L675.2,157.7L676.6,157.5L677.5,158.6L680.4,158.4L678.4,159.7L680.3,161.1L680.6,161.5L683.7,160.4L685.9,159.7L683,159.1L682.6,158.2L683.5,157.7L686.2,157.3L688.8,156.6L689,155.7L691.7,155.1L692.2,152L688.4,151.3L683.9,150.6L681.5,148.2L680.3,147L677.2,147.5L674.8,149L669.4,148.6L664.8,147.9L662.3,148.4L663,149.9L660.5,152.2Z"><title>UKR</title></path><path class="c2" d="M662.3,148.4L664.8,147.9L669.4,148.6L674.8,149L677.2,147.5L678.8,145.1L675.4,142.6L675.5,141.2L670.6,140.3L667.7,141L665.7,143.7L662.1,144.1L662.8,145.9L662.3,147.5Z"><title>BLR</title></path><path class="c2" d="M657.8,140.3L664.7,139.7L667.7,141L665.7,143.7L662.1,144.1L660.9,143.3L660.7,142.4L658.1,141.9Z"><title>LTU</title></path><path class="c2" d="M657.8,140.3L657.6,139L658.7,137.7L660.5,137.3L661.6,138.6L663.2,138.4L663.8,137L669.2,137.7L670.6,140.3L667.7,141L664.7,139.7Z"><title>LVA</title></path><path class="c3" d="M663.8,137L662.1,135.4L661.9,134.6L664.8,134.1L667.6,133.7L670.3,134.1L669.2,135.5L669.2,137.7ZM659.2,136.3L661.2,135.7L660.3,136.8Z"><title>EST</title></path><path class="c4" d="M661,133.5L663.1,134L664.8,132.8L667.3,131.7L669.9,132.3L672.1,131L676.6,127.9L673.9,125.9L673.5,122.8L672.1,120.7L673.9,119.2L671.2,117.8L671.9,116.7L670.1,114.9L668.5,115.2L666.3,116.9L664.7,117.6L661.2,117.4L657.6,116.9L656.9,116.7L659.4,117.9L662.1,118.8L662.5,121.4L663.2,122.7L665.4,124.1L663.4,125.3L661.2,126.3L658.1,127.9L658.1,131.4L658.5,132.1Z"><title>FIN</title></path><path class="c4" d="M663.2,122.7L659.9,122.8L658.1,125L656.3,126.6L654,127.4L650.9,129.6L650.7,131.9L653.6,133.2L652.1,134.4L649.6,136.8L649.8,137.7L648.5,140.1L645.4,141.3L643.1,141.5L642.7,140.1L641.1,137.3L639.8,135L641.3,133.2L642.4,131.4L641.6,130.3L641.6,127.7L644.9,125.9L645.8,123.6L647.6,121.8L649.2,119.6L652.5,117.8L655.8,116.9L656.9,116.7L659.4,117.9L662.1,118.8L662.5,121.4ZM652.5,138.6L654,137L653.6,138.1ZM649.2,140.1L650.5,138.1L649.6,139.5Z"><title>SWE</title></path><path class="c4" d="M639.8,135L638.5,134.4L636.7,135.2L634,136.8L632.2,136.8L629.5,135.4L628.6,132.3L628.6,129.6L631.3,128.1L633,127L634.9,126.8L637.6,125.9L639.5,124.5L642.2,122.3L644.9,119.9L645.8,118.3L647.6,117L651.2,115.9L654,115L656.2,114.5L658.5,114.5L662.1,113.4L664.2,113.6L666.3,113L668.3,112.3L670.3,113.2L673.1,113.5L675.7,114.3L673.9,115.6L675.4,115.4L671.9,116.7L670.1,114.9L668.5,115.2L666.3,116.9L664.7,117.6L661.2,117.4L657.6,116.9L656.9,116.7L655.8,116.9L652.5,117.8L649.2,119.6L647.6,121.8L645.8,123.6L644.9,125.9L641.6,127.7L641.6,130.3L642.4,131.4L641.3,133.2ZM643.1,118.7L645.8,117.8L647.6,116.5L644.9,117.6Z"><title>NOR</title></path><path class="c4" d="M675.4,115.4L671.9,116.7L671.2,117.8L673.9,119.2L672.1,120.7L673.5,122.8L673.9,125.9L676.6,127.9L672.1,131L669.9,132.3L672.1,133.2L674.5,133.4L672.4,134L670.3,134.1L669.2,135.5L669.2,137.7L670.6,140.3L675.5,141.2L675.4,142.6L678.8,145.1L677.2,147.5L680.3,147L681.5,148.2L683.9,150.6L688.4,151.3L692.2,152L691.7,155.1L689,155.7L688.8,156.6L690.8,156.6L688.4,157.7L687.5,159.5L686.2,160L687.5,160.9L689.3,161.7L692,163.3L696.6,163.6L699.3,164.7L702,164.9L703.8,166L706.2,167.3L707.6,166.2L705.7,164L704.7,161.3L705.7,159.5L708.4,158L707.5,155.8L704.7,154.9L703.8,154L704.7,152.2L705.7,150.8L707.8,150.2L712,148.4L716.5,149.1L719.3,150.2L724.7,149.3L727.4,150.2L731,149.5L728.3,147.7L730.1,144.2L737.4,143.3L743.7,141.9L748.3,143.7L752.8,144.1L758.2,143.5L760.8,145.3L764.6,149.9L770,149.5L774.6,152L777.8,152.8L781.8,151.5L786.4,150L791.8,151.3L796.9,151.7L797.8,148.6L799.1,147.7L804.9,149L805,150.4L809.9,150.6L813.6,151.7L819,152.8L824.4,151.7L831.2,151.7L833.2,152.2L835.7,150.6L837.1,148.6L838.4,146.8L837.1,145.3L839.9,145.3L843.5,145L848,146.2L850.7,151L850.7,151.7L855.3,153.3L857.1,155.5L859.8,155.5L863.8,154.4L862.5,156.8L860.9,160.2L858.5,159.8L857.1,160.7L857.5,163.1L856.4,165.1L856.6,165.3L858.9,163.6L861.1,164.4L862.9,162.5L865.3,161.3L868,158.6L870.7,156.8L873.8,154L874.3,151.3L875.8,147.7L875.2,145.3L873.4,145L871.6,143.7L868.9,144.1L867.1,143L865.3,142.8L868,140.8L870.7,138.6L874.3,136.8L876.6,135.6L878.9,134.4L881.3,134.2L883.7,134.3L886.1,134.4L888.4,133.6L890.7,133.2L893,134.1L894.9,135.1L896.9,133.9L898.8,134.4L900.6,133.2L902.7,132.5L903.3,130.5L905.5,130.2L907.6,130.5L909.7,130.1L911.7,129.2L914.1,130L916,128.6L914.2,131.4L911.9,131.4L909.7,132.3L908.4,134.4L905.9,135L904.3,136.8L902.4,138.6L901.7,142.2L902.4,146.8L903.7,149.5L906.6,147.7L907.2,145.9L909.7,143.2L913.3,142.2L915.5,140.1L914.8,137.7L916,135.9L917.9,133.5L920.6,132.8L923,131.8L925.4,133.3L927.8,133.2L929.5,132L931.5,131.4L933.4,129.6L936,129.9L938.9,129.9L941.4,128.6L945.1,128.8L944.2,127.7L942.2,126.7L941.4,124.7L943.2,124.8L946,124.1L946,117L942.3,116.1L938.7,115.4L936.5,114.8L934.2,115.6L931.9,114.6L929.6,115L927.8,116.9L925.8,116.6L924.2,115.4L922,116L919.8,115.5L917.7,115L915.5,115.8L913.3,115.8L909.7,115L907.2,115.6L905.2,114.1L903,112.9L900.6,113.2L898.4,113L896,113.4L893.8,112.3L891.6,112.3L890,111L887.9,110.9L885.9,110.4L883.8,111L881.7,110.2L879.6,111.7L877.5,111.4L875.5,109.8L873.4,110.5L871.2,111L868.8,111.1L866.5,111.5L864.3,112.3L862.1,112.4L859.7,112L857.6,113.9L855.3,113.2L854,111.1L851.6,110.5L849.8,109.1L847.3,108.2L845,109.1L842.6,109.6L840.6,109L838.5,108.1L836.4,109.1L834.3,108.4L832.3,107.9L830.2,108.5L828.1,108.3L824.4,107.2L821.6,106.4L819,107.8L816.2,108.3L813.6,109.2L809.9,110L811.8,107.8L813.6,106.7L815.9,106.4L817.7,105.1L819,103.3L817.1,102.1L814.8,102.9L813,100.9L810.6,102L808.7,101.1L806.6,101.3L804.7,102L802.6,101.9L800.9,103.3L798.6,103.9L796.3,103.8L794.2,104.9L791.8,104.2L789.6,103.9L787.7,105.7L785.3,103.7L783.3,104.9L781.3,106.1L779.1,105.4L777.3,108.1L775.1,109.1L772.8,109.3L770.5,108.5L768.2,108.7L766.8,110.4L764.6,110.5L761,110.9L758.3,110L755.5,110L754.6,112.3L754.1,114.5L752.7,116.4L752.8,118.7L751,121.4L750.1,117.8L750.2,115.4L751,113.2L749,112.6L747.9,110.9L746.5,109.6L745.3,111.8L742.8,112.3L740.7,115L741,117.2L744.6,118.1L742.8,116.9L740.5,117.8L738.5,117.3L736.5,116.9L734,116.6L731.7,115.6L729.2,115.4L726.5,117.2L724.3,118L721.9,116.4L719.7,117.5L717.4,117.8L715.6,118.7L713.4,119.9L711,118.1L708.9,119.7L706.6,119.2L702.9,118.1L699.3,117.8L698.9,119.7L698,121.4L699.3,122.3L696.9,122.4L694.7,123.2L693,124.8L690.9,126.4L688.4,125.9L685.7,125.9L682.6,125L682.1,122.7L679.4,121L683,121.8L685.6,123.1L688.4,122.3L691.2,122.1L693.9,121.4L694.4,119.6L692.5,118.9L690.4,118.6L688.4,118.1L686,116.4L683,116.5L679.4,116.1L677.5,114.9ZM293,124.1L295.8,123.2L298.2,122.5L300.3,124.1L302.9,124.3L305.4,125.2L306.6,123.6L310.3,123L311.7,122.1L309.4,121.9L307.5,120.5L304.8,120.3L302.1,119.6L299.2,119.2L296.7,117.9L293,117ZM655,143.3L655.8,142.4L658.1,141.9L660.7,142.4L660.9,143.3ZM712.9,112.3L714.4,113.9L716.5,113.6L718.9,113.8L721.4,113.7L723.8,114L721.9,112.7L721.1,110.5L722.9,107.8L724.5,106.5L726.3,105.8L728.3,105.4L730.5,104.6L732.8,104.1L735,103.2L737.4,103.3L739.9,103.6L742.2,102.4L744.6,102.3L741.9,102.5L739.2,102.3L737.1,103.5L734.9,103.1L732.8,103.8L730.6,104.2L728.3,103.6L726.2,105.3L723.5,104.9L721.1,105.4L720,107.3L718.3,108.7L716.3,109.1L714.7,110.5ZM791.8,98.7L794.2,98.4L796.5,98.7L798.6,99.7L800.9,100.2L803,98.7L805.3,99L807.7,99L809.9,98.7L808.2,98L806.4,97.2L804.2,97.7L802.9,95.6L800.9,95.5L798.6,95.5L796.3,95.3L794.1,95.2L791.8,95.1ZM868,105.1L870.1,105.8L872.1,106.4L874.3,105.4L876.5,104.7L878.6,105.1L880.7,106L882.8,105.3L885,105.7L887.2,104.8L889.3,104.7L891.6,105.6L889.1,106.2L887.1,104.2L884.7,105.1L882.5,104.2L880.4,104.9L878.3,105L876.1,103.8L874,104.4L871.9,103.7L869.8,104.2ZM877,158.6L879.8,157.1L878.9,153.1L881.6,153.1L880.9,150.7L879.4,148.6L878.9,145L878,143.5L877,145.9L876.7,149.5L877.2,154L876.9,157.5Z"><title>RUS</title></path><path class="c1" d="M606.3,129L607.7,129.2L607,130.3Z"><title>FRO</title></path><path class="c7" d="M393.3,154.2L396.2,153.1L446.8,153.1L447.6,152.4L447.9,153.7L452.6,154.4L457,154.9L459.2,154.4L465.5,156.9L466.2,157.7L467.9,158.4L468.1,158.9L469.9,159.8L470.6,162.9L470.1,164L468.8,165.6L469.5,166.4L476.2,164.4L476.2,163.5L475.9,163.1L480.2,162.9L481.1,161.8L483.5,160.4L489.8,160.4L491.1,159.7L492,158.8L494,156L495.8,156L496.5,156.6L496.5,159.1L497.8,160.2L498.1,160.7L496.2,161.5L494.2,162.2L492.4,162.7L491.3,163.8L491.1,165.3L492.5,166.4L491.5,166.7L489.1,167.1L485.8,167.8L485.3,168.4L485.3,170L483.7,171.4L482.6,170.4L483.3,172.2L481.8,174.5L481.1,171.4L480.8,173.3L481.7,175.1L482.6,178.2L480.9,179.1L478.2,180.5L475.9,181.8L472.8,184L471.9,186.3L473.3,190.3L474.2,193.4L473.7,196.3L472.4,196.5L471.1,194.7L469.3,191.6L469.5,189.6L467.7,187.8L466.6,187.6L464.8,188.1L462.6,186.9L459.9,187L457,187.2L457.7,189.2L455.9,189.2L453.4,188.3L449.4,188.1L447.7,188.7L444.5,190.7L442.8,192.5L443.4,195L439.8,194.1L439,192.1L436.5,188.9L433.8,188L432.5,189.4L430,188.3L426.3,184.4L423.3,184.3L423.3,185.2L418,185.2L411.3,183.1L407.1,183.1L406.8,182.1L404.8,180.9L404.6,180.3L400.9,179.4L400.8,178.3L398.4,175.6L397.3,173.4L396.4,173.1L395,170.7L393.9,168.7L394.2,166.2L393.7,164.4L394.4,162.2L394.8,158.2L394.4,156.9ZM363.8,115.8L360.1,114.9L357.8,115.4L355.6,114.3L353.4,113.7L351.1,114.3L348.6,114.8L346.3,112.7L343.8,113.6L341.7,113.7L339.6,113.5L337.5,113.4L335.5,112.7L333.2,112.7L331.1,113.6L328.5,114.4L325.7,114.5L323,115.8L320.5,116.4L318.1,117L317,118.1L318.9,119.2L321.1,119.2L322.6,120.3L326,120.7L326.6,121.8L324.6,120.8L322.4,121.2L320.2,120.7L318.4,122.1L316.7,123.5L314.6,123L317.5,124.7L320.6,125L324.2,125L327.5,124.3L327.9,126.3L325.7,126.8L323.6,128.2L321.1,127.6L319.7,128.6L318.2,130.3L320.2,131.5L322.1,133.5L324.8,133.2L325.7,134.4L326,135.5L328.8,135.2L331.3,136.1L334.7,135.4L333.8,137.7L332,139L328.4,140.4L325.7,141.5L323.1,142.4L325.1,142.2L329.3,141L332,140.4L335.7,138.6L338.4,137.2L341.1,135.7L342,134.1L344.2,134.6L347.4,133.9L350.2,133.2L351.1,131.7L354.7,131.9L357.4,133.2L360.1,132.5L362.9,133.2L365.9,133.9L367.8,134.8L369.6,135.9L371.9,136.4L373.7,138.6L376.5,140.4L379.2,142.2L381.9,142.6L382.6,142.6L383.5,141.2L383.7,140.3L380.1,138.6L377.6,136.1L374.7,134.4L371.9,134.1L370.1,135.2L367.4,133.2L363.8,132.6ZM338.7,138.1L342,138.6L343.5,137.5L342.7,136.4L340.2,137ZM307.9,127L310.4,128L313,127.7L313.3,126.8L310.3,126.5ZM336.6,207.5L338.6,206.6L336.9,205.4L336.6,206.3ZM335.3,204.3L336.6,204.5L336,203.9ZM332.6,203.2L333.5,203.4L332.9,202.6ZM329.9,202.1L330.6,202.3L330.2,201.7Z"><title>USA</title></path><path class="c6" d="M363.8,115.8L367.4,115.9L369.4,117.6L371.9,117L375.6,115.9L379.2,115.6L382,116.4L384.6,115L387.3,114.1L388.3,114.5L390.4,114.4L391.9,115.9L394.6,116.1L397,116.5L399.1,115.4L401.5,116.3L404.1,115.8L406.4,116.9L408.9,117.1L410.9,118.7L413.2,118.8L415.5,117.6L417.7,118.8L420,118.8L422.7,119.6L423.6,118.3L427.2,117.2L430,118.7L432.6,119.9L435.4,119.2L438.1,118L440.9,119L442.7,117.8L445.4,118.3L445.4,115.9L445.7,113.2L447.9,111.4L450,112L451.7,113.2L452.6,115.6L455.4,117.8L457.5,119.1L459.9,119.6L461.2,119.9L463.3,118.9L464.4,116.9L464.4,115.4L467.2,115L469.9,115.6L472,116.5L471.9,118.7L469.9,121.4L467.1,121.8L464.9,121.3L462.6,121.4L463.5,122.7L460.8,123.6L461.7,125L459.9,125.6L456.3,126.3L453.6,126.2L451.7,128.1L449,130.5L447.7,133.2L448.1,135.4L451.2,138.3L453.7,138.2L456.3,138.6L459.9,139.9L462.7,140.4L465.3,141.7L467.8,141.3L470.2,142.1L470.6,145.9L472.6,148.1L473.5,149L475.3,148.6L476.6,146.8L476.2,144.1L475.3,142.6L478.9,141.3L480.2,139.5L480.8,137.7L477.1,135.5L478.6,133.2L477.3,131.2L478,129L478.9,128.6L481.6,129.7L484.4,129.2L486.5,130.5L488.9,130.5L492.5,131.4L493.4,133.2L493.4,135L496.2,136.4L499.8,135.4L501.6,132.6L502.5,132.6L503.8,134.8L506.1,135.9L508,139L510.7,141.3L514.3,142.6L515.6,143.2L517.9,145.9L518.5,147.7L516.1,148.8L512.9,149.5L510.7,151L507.9,151.6L505.2,150.8L502.1,150.8L498.9,151L497.1,152.6L494.4,153.7L491.6,156.4L490.4,157.1L493.4,155.3L495.9,154.6L498,153.1L501.6,152.8L502.9,153.5L500.7,154.9L501.6,155.8L502,156.8L502.5,158.2L504.3,158.8L508,159.1L508.9,159.8L504.3,161.1L500.7,163.1L499.4,162.6L499.8,161.1L502.5,159.8L500.2,160L497.8,160.2L496.5,159.1L496.5,156.6L495.8,156L494,156L492,158.8L491.1,159.7L489.8,160.4L483.5,160.4L481.1,161.8L480.2,162.9L475.9,163.1L476.2,163.5L476.2,164.4L469.5,166.4L468.8,165.6L470.1,164L470.6,162.9L469.9,159.8L468.1,158.9L467.9,158.4L466.2,157.7L465.5,156.9L459.2,154.4L457,154.9L452.6,154.4L447.9,153.7L447.6,152.4L446.8,153.1L396.2,153.1L395.9,152.6L393.7,151.3L390.1,149.9L388.3,149.5L387.7,147.1L385.5,145L383.2,143.5L382.6,142.6L383.5,141.2L383.7,140.3L380.1,138.6L377.6,136.1L374.7,134.4L371.9,134.1L370.1,135.2L367.4,133.2L363.8,132.6L363.8,115.8ZM395.7,154.2L393.2,153.9L391,152.8L388.7,151.7L386.8,150L389.2,150L392.2,151.3L394.6,152.8ZM381.5,147.3L379.2,145.5L378.3,143.9L380.5,144.1L380.5,145.9ZM511.9,155.7L513.8,153.9L515,151L516.7,149L518.7,148.4L517.9,151.3L521.6,152.4L522.5,154L523.9,155.8L522.5,157.5L518.8,156.9L517.9,155.7L514.9,156ZM508,159.3L509,157.1L510,156.8L511,158.6L509.8,159.3ZM502.7,157.5L505.2,157.8L507.1,157.8L505.6,158.6L503.4,158ZM502.5,151.7L506.1,152L507.4,152.9L504.3,152.6ZM500.7,129.7L498.1,128.7L495.3,128.5L491.6,128.1L488.9,126.3L486.8,125.1L484.4,125L481.7,125.4L478.9,125.4L478,124.5L478.9,123.4L481.1,124.1L483.2,123.2L485.3,123.2L486.2,121.4L488,119.6L486.2,118.1L483.5,117.6L480.8,116.9L479.2,115.5L477.1,115.4L474.4,115.8L471.7,115L469.7,114.3L467.7,115.7L465.7,115L463.9,113.7L461.7,115.4L459.9,114.1L457.2,113.2L456.3,111.4L457.2,108.7L459.3,108.9L461.5,109.4L463.5,108.1L465.3,109.6L466.2,108.3L468.4,108.5L470.5,109.3L472.6,108.1L473.5,110.1L475.6,109.4L477.7,110.2L479.8,110L481.3,111.6L483.5,111.2L485.3,111.8L488.1,111.7L490.7,112.9L492.6,114.7L495.3,114.5L497.1,116.9L498.9,118.7L501.1,119.3L503.4,119.6L505.8,119.8L508,120.8L507.1,122.3L505.2,122.8L503.4,123.7L500.7,122.3L497.1,121.8L496.2,121.9L498.9,124.1L501.4,124.6L502.5,126.8L500.7,128.1L497.8,128L495.3,126.5L497.9,127.1L499.8,129ZM406.8,115L409,115.7L411.5,115.3L413.6,116.5L415.7,117.3L418.1,116.2L420,117.6L422.3,117.5L424.5,118L426.8,117.7L429.1,117.6L431.2,117.2L433,115.4L435.4,115.9L434.5,114.1L432.2,114L430,113.2L429.1,110.5L427.4,109.6L425.4,109.2L422.7,109.5L420,109.8L417.6,109L415.2,108.5L412.7,109.6L410.2,108.9L408,111L405.5,110.5L403.7,112.3L405.1,113.8ZM392.8,111.4L395.5,112.9L398.1,111.6L400.9,112.3L403.7,110.5L404.7,108.6L406.4,107.4L403.9,107.8L401.6,106.2L399.1,106.9L396.4,106.2L393.7,107.2L391.9,109.6ZM407.3,105.6L409.4,107L411.7,107.1L414,106.9L416.4,106.7L418.5,106L420.8,107.5L422.9,106.1L425.1,106.5L427.2,106L427.2,103.8L424.8,103.8L422.4,103.9L420,103.3L417.8,102.2L415.8,103.9L413.6,102.5L411.5,102.9L409.4,102.5L407.3,103.6ZM434.5,112.3L436.8,111.2L439,113.3L441.3,111.5L443.6,112.3L443.6,108.7L441.1,109.5L438.8,107.4L436.3,108.1L436.4,110.7ZM446.3,111.4L448.5,110.2L450.8,110.7L453,109.9L455.4,110.5L455.4,107.8L453.3,108.4L451.3,107.3L449.2,107.3L447.2,107.8ZM439,116.9L441.4,117.4L443.8,117.9L446.3,117.6L445.4,115.4L442.7,114.6L439.9,115.2ZM461.7,125.9L464.4,127.4L467.7,128.5L469.5,127L471.8,126.7L474,126.3L472.5,125L470.1,125.4L468.8,123.6L467.1,122.7L464.8,122.5L461.7,124.5ZM452.6,106.3L454.6,106L456.6,107.3L458.6,106.6L460.5,106.7L462.5,105.6L464.5,105.9L466.5,106.6L468.5,105.7L470.4,107.1L472.4,107.1L474.4,106.7L475.3,105.1L473.4,104.3L471,105.3L469.2,103.8L467.1,103.4L465.1,102.8L463,103L460.9,103.6L458.9,103L456.8,103.9L454.7,104.6L452.6,103.6ZM473.5,103.8L475.9,104.2L478,103.3L478.9,101.4L481.5,101.3L483.5,99.6L485.2,98.6L487.1,97.8L489.5,97.9L491.8,97.7L493.7,95.3L496.2,96L498.6,96.4L500.6,95.2L502.5,93.4L504.8,93.4L507.1,93.3L506.1,92.4L504.2,92.3L502.3,92L500.2,93L498.4,91L496.4,91.4L494.6,90.6L492.5,91.3L490.5,92L488.4,91.8L486.3,90.9L484.2,90.4L482.2,90.4L480.1,90.3L478,91.3L475.9,91.8L473.8,91.4L471.8,92.7L469.7,93L467.4,91.6L465.3,92.6L463.1,93.4L461,94.3L458.3,92.6L456.3,94.2L454.5,96L456.8,96.8L459.5,96.2L461.7,97.6L463.5,100.2L460.7,100.8L458.1,101.8L459.9,103.4L461.8,103.6L463.8,103.6L465.8,102.6L467.6,104.6L469.6,104.7L471.6,103ZM456.3,100L458.4,100L459.9,98.6L461.7,97.8L459.7,97.4L457.8,96.9L455.8,96.6L454.5,94.7L452.1,95.8L449.5,94.1L447.2,95.5L445.4,97.3L447.1,98.2L449.2,98.5L450.8,99.6L453.5,100.7ZM429.1,101.4L431.3,100.8L433.5,100.3L435.8,100.4L438.1,100.9L439.9,99.1L437.7,98.9L435.4,99.1L433.2,97.4L430.9,98.2L429.1,98.9L427.2,99.6ZM433.6,105.1L435.9,105.1L438.2,104.4L440.4,106.1L442.7,106L445.4,104.2L442.5,104.3L439.9,102.9L437.9,104L435.8,103.8L433.6,103.6ZM396.4,104.2L398.4,104.2L400.4,105.3L402.4,104.9L404.4,104.5L406.4,104.2L409.1,102.3L406.7,101.8L404.4,100.6L401.9,101.4L399.6,101.4L398.6,104ZM474.4,109.6L477.1,109L479.8,109.6L478.9,108.1L476.2,108.2L473.5,108.3ZM473.5,145.9L476.2,146.2L475.3,145.1ZM474.4,140.1L476.2,140.6L475.7,139.3ZM468.1,129L470.8,129.6L471.1,128.1ZM473.5,128.6L475.7,129.6L474.8,127.9Z"><title>CAN</title></path><path class="c1" d="M539.9,133.5L538,133L535.9,133.4L534.6,130.9L532.4,131.4L530.2,131.1L529.5,128.8L527.9,127.7L525.7,125.6L524.6,123.1L522.5,121.4L521.6,118.7L523.2,117.4L524.9,116.3L527,115.9L525.2,114.4L522.7,115L520.7,114.1L518.8,111.4L517.8,109.8L515.6,109L515.2,106.9L512.9,105.7L510.7,104.2L508.5,105.1L506.3,105.2L504.1,104.1L502,104.8L499.8,104.2L497,104.3L494.4,103.3L492.6,102.2L490.7,101.4L489,100.5L487.1,100L489.3,99.2L491.6,98.6L493.9,98.3L496.2,97.8L497.8,96.4L500,96.4L501.6,95.1L503.9,94.9L506.3,94.9L508.4,93.4L510.7,93.3L512.7,92.9L514.7,92.8L516.7,92.5L518.8,93.8L520.8,93.4L522.7,91.8L524.7,91.5L526.8,92.2L528.8,92.4L530.8,91.9L532.8,91.8L534.8,91.2L536.8,90.7L538.8,90.8L540.9,91.2L542.9,90.7L544.9,90.3L547,90.7L549,89.9L551.1,90.6L553.2,91.1L555.2,89.6L557.3,89.9L559.4,91.5L561.5,90.4L563.5,91.7L565.8,89.9L567.7,91.6L569.9,91.2L572,91.4L574.2,91.5L577,91.9L579.6,92.9L581.8,93.9L584.2,93L586.5,93.1L588.7,94.2L590.6,95.3L592.7,93.4L594.7,94.3L596.6,94.5L598.6,94.5L596.6,94.5L594.7,95.3L592.9,96.7L590.7,95.8L588.6,95.5L586.9,96.9L587.8,100.5L586.1,101.6L585,103.3L583.2,106L584.1,108.7L581.3,109.1L579.6,111.4L579.6,114.1L577.4,115.2L575.1,114.7L576.9,115.9L574.8,117.4L572.3,117.8L570.2,118.9L567.7,117.5L565.4,117.5L563.3,118.7L561.7,120L559.8,120.8L557.8,121.4L555.5,120.8L553.7,122.9L551.5,122.8L549.2,123.5L547,124.1L545.2,125.5L545.1,127.7L544.6,130.1L542.4,131.4Z"><title>GRL</title></path><path class="c2" d="M575.1,123.2L576.6,121.9L578.7,121.6L581.3,121.1L583.2,122.8L585.6,121.9L588.1,122L590.5,121.4L593.2,123.2L595,124.1L592.3,125.6L590.3,126.5L588.1,126.8L585.9,127L583.8,126L581.4,126.3L578.3,126.3L579.6,125L576,124.3L579.6,123.6L577.3,123.8Z"><title>ISL</title></path><path class="c3" d="M407.1,183.1L411.3,183.1L418,185.2L423.3,185.2L423.3,184.3L426.3,184.4L430,188.3L432.5,189.4L433.8,188L436.5,188.9L439,192.1L439.8,194.1L443.4,195L442.3,198.5L442.1,201.6L443.2,204.3L445.2,207.2L447.2,208.4L449,209L452.6,208.1L454.5,207.5L455.4,205.7L455.5,203.9L459.9,202.8L462.1,203.5L460.8,205.7L460.3,208.8L459.4,208.4L457.9,209.7L454.5,209.7L454.5,210.8L455.4,212.8L453.2,212.8L452.3,214.8L452.3,215.7L449,213L446.8,212.8L444.5,213.5L440.9,212.4L438.3,211.5L434.5,209.4L431.8,208.8L429.1,206.8L428.2,205L428.5,203L426.5,199.9L423.6,196.7L421.1,195.4L421.1,193.6L419.1,191.6L416,189.4L414.6,185.8L411.3,184.3L411.5,185.8L413.6,189.4L415.5,191.6L417.6,194.8L419.1,197.6L420.9,199.9L420.2,200.5L419.4,199.4L416.4,197L416,194.8L413.6,193.4L411.8,191.6L412.7,190.3L409.7,187.6L407.8,184.7Z"><title>MEX</title></path><path class="c2" d="M452.3,215.7L452.3,214.8L453.2,212.8L455.4,212.8L454.5,210.8L454.5,209.7L457.9,209.7L457.7,213.2L459.5,213.5L457.5,215.9L456.1,217Z"><title>GTM</title></path><path class="c1" d="M457.9,209.7L459.4,208.4L459.7,210.3L458.3,213.2L457.7,213.2Z"><title>BLZ</title></path><path class="c1" d="M457.5,215.9L459.5,213.5L463.5,213.2L467.1,213.3L468.6,214.8L465.3,216.6L462.1,217.9L461.2,218.4L460.3,217.7L459,216.6Z"><title>HND</title></path><path class="c1" d="M456.1,217L457.5,215.9L459,216.6L460.3,217.7L459,218.1Z"><title>SLV</title></path><path class="c1" d="M461.2,218.4L462.1,217.9L465.3,216.6L468.6,214.8L468.1,218.4L467.7,222L464.1,221.9L461.7,219.5Z"><title>NIC</title></path><path class="c2" d="M464.1,221.9L467.7,222L469.7,224.6L469.1,227.3L467.7,226.4L465.3,224.4L463.9,223.1Z"><title>CRI</title></path><path class="c2" d="M469.1,227.3L469.7,224.6L472.6,226L475.1,224.6L479.1,226.2L479.5,227.7L478.2,228.9L477.1,227.1L474.8,226.4L473.7,228.8L471.7,228Z"><title>PAN</title></path><path class="c0" d="M465.5,202.3L469,200.3L471.7,200.1L475.3,201.2L478.9,202.6L482.2,204.1L484.9,205.4L483.5,205.9L481,205.8L478.6,206L479.5,204.6L477.1,203L473.5,202.1L470.8,201.4L468.1,201.7Z"><title>CUB</title></path><path class="c0" d="M484.6,208.6L486.4,205.9L489.5,206.1L489.3,209.4L488,209Z"><title>HTI</title></path><path class="c0" d="M489.5,206.1L492.5,206.1L495.4,208.3L493.3,208.6L490,209.9L489.3,209.4Z"><title>DOM</title></path><path class="c0" d="M477.5,208.8L479.8,208.4L481.1,209.4L479.3,209.7Z"><title>JAM</title></path><path class="c0" d="M497.6,208.6L500.3,208.6L500.2,209.4L497.6,209.4Z"><title>PRI</title></path><path class="c0" d="M477.5,193.8L479.5,193.9L478.4,193.2ZM478.2,196.7L478.9,198.1L477.7,197.7ZM486.2,203.5L487.1,204.1L486.6,203.2Z"><title>BHS</title></path><path class="c0" d="M507.4,223.7L508.9,223.5L508.9,222.4L507.6,222.6Z"><title>TTO</title></path><path class="c6" d="M826.6,281.5L829,279.7L831.3,279.2L834.4,278.8L835.3,278.3L839,277.5L841.1,274.6L842.4,271.9L843.7,273.4L845.3,271L847.7,267.9L849.5,267.2L851.7,268.8L854.4,269L854.9,266.5L856.4,264.5L858.9,263.9L860,262.3L864.3,264.1L867.6,263.8L866.2,266.5L865.3,268.8L867.4,270.7L869.3,272.3L871.6,273.4L874.3,273.9L875.1,272.8L876.3,269.2L876.1,265.6L877.4,261.6L878,261.4L879.8,265.2L879.8,267.8L883,269L883.9,272.7L885.2,276.3L887.4,277.4L889.4,278.8L890.6,281.9L893,283.4L893.2,284.6L896.6,287.3L897.4,290.1L897.9,293.1L897.2,297.3L896.1,300.9L893.9,303.5L892.1,306.7L891.6,309.7L891.4,310L887.6,310.7L885,312.9L882.3,310.9L879.8,312.4L875.2,311.1L873.1,309.1L872.5,306.9L870.7,306.6L870.7,305.1L869.6,301.9L869.4,301.1L868,303.7L866.2,305.3L864.7,303.7L862.9,301.5L861.6,300.2L857.1,299.1L853.5,299.5L850.7,299.8L848,300.6L844.4,301.9L843.5,303.5L840.3,303.6L837.1,303.5L833.5,305.5L829.9,305.3L828.1,304.2L829.2,302.4L829.3,300L828.1,296.4L827.4,294.2L826.1,291L825.2,289.2L825.4,286.4L825.9,283.7L826.3,281.9ZM881.9,315.8L885.2,316.5L888.5,316.2L888.5,318.7L887,320.5L885.2,321.1L883.4,319.8L882.8,318.2ZM867.3,306.7L869.1,306.6L869.6,307.1L867.6,307.3ZM856,262.7L858,262.7L856.9,263.6Z"><title>AUS</title></path><path class="c4" d="M932.7,304.4L934.2,306L936.5,308.7L937.8,308.4L938.7,310.2L942.3,310.2L943.2,310.4L942.2,313.1L940.5,313.5L940.3,315.1L937.4,317.4L937.3,315.1L934.7,313.3L936.4,311.8L936.4,309.7L935.4,308L933.3,305.5ZM932.7,315.5L935.1,316.4L935.6,317.6L933.3,320L932.9,321.3L930.2,322.3L929.1,325.2L926,326.5L924.7,326.5L921.5,325.4L922,324L924.2,322.2L927.8,320L930.5,317.8L931.6,316.2ZM923.5,326.9L924.6,327.1L923.8,327.6Z"><title>NZL</title></path><path class="c0" d="M875.2,246.7L878,247.8L881.6,248.9L883.9,250.7L883.9,252L887,252.9L887.6,254.2L886.1,254.3L887.9,256.5L890.6,259.4L893,260.7L891.6,261.2L887.9,260.3L886.5,259.2L884.3,256.9L882.1,256L879.8,257.1L879.4,258.3L878,258.7L875.2,258.5ZM888.5,252.3L891.9,252L894.3,249.6L895.7,249.8L895.2,252L892.5,253.4L889.7,253.4ZM893,246.7L896.1,248.9L897,250.5L895.5,249.3ZM900.1,252L902.3,254.3L901,253.8ZM885.4,245.6L886.7,245.8L886.1,246.2Z"><title>PNG</title></path><path class="c0" d="M903.5,254.7L905.2,255.6L903.9,255.8ZM907,255.8L909.3,257.2L907.9,257.1ZM909,258.9L911.1,259.8L909.7,260ZM910.8,257.2L911.9,259.2L911.3,258.3ZM912,260.5L913.9,261.6L913,261.4Z"><title>SLB</title></path><path class="c0" d="M921.7,269.2L922.8,270.1L922,270.5ZM922.9,271.2L923.8,271.9ZM924.6,273.9L925.1,274.3ZM926.4,277.2L926.9,277.5Z"><title>VUT</title></path><path class="c0" d="M916.9,278.5L919.7,280.1L922.4,282.4L920.6,281.9L917.9,280.1ZM922.8,279.7L923.3,280.1Z"><title>NCL</title></path><path class="c0" d="M941.1,273.9L943.4,274.1L942.9,275L941.3,274.8ZM943.8,271.9L946,271.4L945.1,272.5Z"><title>FJI</title></path><path class="c0" d="M881.8,217.9L882.3,217.3L882.1,217.9ZM869.8,225L870.2,224.6ZM906.2,229.7L906.8,229.3L906.6,229.7ZM915,232.4L915.3,232.2ZM933.1,236.4L933.5,238.6ZM933.1,239.5L933.6,241.5ZM936,242.9L936.9,244.7ZM894.6,228.8L895,228.4ZM929.6,229.3L930.4,228.9ZM306.1,266.5L308.6,267.2L306.8,267ZM301.6,280.3L302.1,280.5ZM348.2,273.7L349.1,274.3ZM453.5,242.5L454.8,243.8L454.5,242.4ZM455.4,242.9L455.9,243.3ZM501.8,183.6L502.3,183.2ZM507.4,213L508.5,212.4L508,213.2ZM508.5,215.9L509.2,215.2ZM508.7,217.2L509,216.4ZM511.2,218.4L511.8,217.9ZM507.4,220.2L507.8,219.9ZM752.6,234.4L753,234.9ZM750.8,255.2L751,255.4ZM720,250.3L720.3,250.5ZM609,270.8L609.3,271ZM593.4,256.3L593.6,256.5Z"><title>PAC</title></path><path class="c3" d="M479.1,226.2L480.2,227.5L481.7,225L482.6,223L483.8,221.9L487.1,221.1L489.5,219.5L490.2,219.9L490.2,220.6L488.4,221.9L487.1,224.2L488.2,226.8L488.9,229.3L492.5,229.3L493.6,230.9L497.1,230.8L496.5,234.2L497.4,236.6L498,239.8L492.9,238.9L492.7,240L494,240.9L492.5,242.4L493.6,244.2L492.7,249.6L491.3,248.9L487.3,246.4L486,244.4L482.9,242.2L481.1,241.3L479.1,241.3L476.6,239.5L477.1,237.5L478.9,234.7L479.3,232L478.9,229.3L478.2,228.9L479.5,227.7Z"><title>COL</title></path><path class="c2" d="M490.2,220.6L489.6,222.6L490.4,224.2L490.7,222.4L492.2,221L492.5,219.9L492.9,221.3L495.4,221.7L495.8,222.8L499.4,222.8L501.6,223.7L502.9,223.1L507.1,222.6L505.6,223.1L507.2,224.2L509,225L509.4,226.4L510.9,226.8L510.7,227.5L508.1,231.3L509.4,232.6L508.9,233.8L505.6,234.7L502.9,234.6L503.4,237.5L504.5,238L500.7,240.5L498,239.8L497.4,236.6L496.5,234.2L497.1,230.8L493.6,230.9L492.5,229.3L488.9,229.3L488.2,226.8L487.1,224.2L488.4,221.9L490.2,220.6Z"><title>VEN</title></path><path class="c0" d="M510.9,226.8L513.4,228.8L515.8,231.1L515.9,231.3L515.6,232.9L514.3,234.7L517,238.6L513.4,239.6L511.2,238.7L510.9,237.5L511.6,234.9L510.5,232.9L509.4,232.6L508.1,231.3L510.7,227.5L510.9,226.8Z"><title>GUY</title></path><path class="c0" d="M515.9,231.3L518.1,231.3L521.6,231.5L520.7,233.1L521.6,235.5L520.5,237.8L517.9,238.7L517,238.6L514.3,234.7L515.6,232.9Z"><title>SUR</title></path><path class="c0" d="M521.6,231.5L523.6,232.2L525.7,234.4L524.1,237.5L520.5,237.8L521.6,235.5L520.7,233.1Z"><title>GUF</title></path><path class="c4" d="M525.7,234.4L527.5,236.4L528.8,238.7L527.7,241.5L526.1,243.5L525.2,244.7L527.4,245.4L530.1,245.4L531.4,244.7L532.4,243.3L535.6,244.5L538.8,245.6L539.2,246.5L541.7,246.8L544.2,247.3L547,247.1L549.7,248.7L552,250.5L555.5,251.4L556,252.9L556.4,255.1L556.4,256.5L555.1,259.2L552.4,262L550.6,265L549.7,265.6L548.8,269.2L549.1,271.7L548.6,274.1L547.5,277.5L545.3,281.4L543.3,283.5L541.1,283.7L538.4,284.3L535.5,285.5L532.6,287.3L531.4,289.2L531.4,291.9L531,293.9L528.8,296L526.6,298.2L525,300.4L522.6,303.1L522.5,301.3L520.5,299.1L518.1,298L515,296.8L517.9,293.7L519.7,292.4L522.1,290.6L521.9,288.4L520.5,288.4L521,285.5L518.8,285.3L518.5,282.4L514.5,282.1L514.5,279.5L513.9,277.9L515.2,275L513.8,273.4L513.6,271.6L510.3,271.4L509.8,267L507.1,265.9L505.2,264.9L502.7,264.5L501.1,262.9L500.9,259.6L498.7,260L495.3,262L493.4,261.8L491.5,262L491.6,259.2L488.6,260.1L486.7,259L485.3,255.6L485.8,254.5L487.3,251.2L491.1,249.6L492.7,249.6L493.6,244.2L492.5,242.4L494,240.9L492.7,240L492.9,238.9L498,239.8L500.7,240.5L504.5,238L503.4,237.5L502.9,234.6L505.6,234.7L508.9,233.8L509.4,232.6L510.5,232.9L511.6,234.9L510.9,237.5L511.2,238.7L513.4,239.6L517,238.6L517.9,238.7L520.5,237.8L524.1,237.5ZM527.5,242.5L529.7,242L531.5,242.7L531.4,244.2L529.5,245.1L527.5,244.4Z"><title>BRA</title></path><path class="c2" d="M476.6,239.5L479.1,241.3L481.1,241.3L482.9,242.2L482.4,244.7L480.6,246.7L477.5,248.2L477.1,250.3L476.2,251.1L473.9,250L473.9,248.2L474.8,246.5L472.8,246L473.5,243.8L474.2,240.5Z"><title>ECU</title></path><path class="c2" d="M473.9,248.2L473.9,250L476.2,251.1L477.1,250.3L477.5,248.2L480.6,246.7L482.4,244.7L482.9,242.2L486,244.4L487.3,246.4L491.3,248.9L492.7,249.6L491.1,249.6L487.3,251.2L485.8,254.5L485.3,255.6L486.7,259L488.6,260.1L491.6,259.2L491.5,262L493.4,261.8L494.9,264.7L494.4,268.3L493.6,270.1L494.5,271.7L493.3,273.4L493.4,273.7L491.8,275.3L490,273.6L487.1,271.9L483.1,269.7L481.1,267.2L479.7,263.9L478,260.9L476.2,256.9L474.6,254.5L472.2,252.9L472,250.5Z"><title>PER</title></path><path class="c2" d="M493.4,273.7L493.3,273.4L494.5,271.7L493.6,270.1L494.4,268.3L494.9,264.7L493.4,261.8L495.3,262L498.7,260L500.9,259.6L501.1,262.9L502.7,264.5L505.2,264.9L507.1,265.9L509.8,267L510.3,271.4L513.6,271.6L513.8,273.4L515.2,275L513.9,277.9L512.3,277L507.4,277.5L506.5,279.2L505.8,282.3L502.9,283.4L501.6,282.1L499.3,281.5L497.6,283.4L495.8,281L494.7,279L495.3,277.2L494.4,276.3Z"><title>BOL</title></path><path class="c1" d="M505.8,282.3L506.5,279.2L507.4,277.5L512.3,277L513.9,277.9L514.5,279.5L514.5,282.1L518.5,282.4L518.8,285.3L521,285.5L520.5,288.4L520.3,290.1L518.5,291.7L517,291.9L513.2,291.3L514.8,287.9L512.9,287L510.7,285.5L508.9,285.2Z"><title>PRY</title></path><path class="c2" d="M515,296.8L518.1,298L520.5,299.1L522.5,301.3L522.6,303.1L521.6,304.4L519.9,305.4L517.6,305.3L514.7,304.6L513.6,303.5L513.9,300.9Z"><title>URY</title></path><path class="c3" d="M497.6,283.4L499.3,281.5L501.6,282.1L502.9,283.4L505.8,282.3L508.9,285.2L510.7,285.5L512.9,287L514.8,287.9L513.2,291.3L517,291.9L518.5,291.7L520.3,290.1L520.5,288.4L521.9,288.4L522.1,290.6L519.7,292.4L517.9,293.7L515,296.8L513.9,300.9L513.6,303.5L513.6,304.8L515.8,306L515.6,307.7L516.7,308L515.2,310.6L515,311.1L512.5,312.2L508,312.7L506.7,312.6L506.5,316.2L503.8,316.7L501.6,316L501.6,318.2L504,318.7L504.1,319.4L502.5,319.8L501.1,321.3L501.1,323.6L498.9,324L497.1,325.4L496.9,326.2L498.9,327.2L500,328.7L497.1,330.9L495.6,332.9L494.4,333.8L495.4,336.9L492.5,336.3L488.9,336.3L488.2,334L486.6,332.7L487.1,330.9L488.4,329.1L488.9,327.2L489.5,323.6L489.5,321.8L489.3,318.2L489.3,315.5L490.7,312.7L490.4,310L491.8,307.3L492.5,303.7L492.9,302.4L492.4,300.9L491.6,298.2L492.7,296.4L493.1,293.7L495.3,291.3L495.6,287.3L495.3,286.4L497.6,285.5ZM495.1,337.6L495.6,338.1L498,340.3L501.2,341.2L498.9,341.8L495.1,341.6Z"><title>ARG</title></path><path class="c3" d="M491.8,275.3L493.4,273.7L494.4,276.3L495.3,277.2L494.7,279L495.8,281L497.6,283.4L497.6,285.5L495.3,286.4L495.6,287.3L495.3,291.3L493.1,293.7L492.7,296.4L491.6,298.2L492.4,300.9L492.9,302.4L492.5,303.7L491.8,307.3L490.4,310L490.7,312.7L489.3,315.5L489.3,318.2L489.5,321.8L489.5,323.6L488.9,327.2L488.4,329.1L487.1,330.9L486.6,332.7L488.2,334L488.9,336.3L492.5,336.3L495.4,336.9L493.4,337.2L491.1,337.8L490.7,339.6L488,339L486.2,337.8L484.4,336.3L483.5,334.1L482.6,330.9L482.6,328.7L482.4,326.7L484.4,325.1L486.2,323.6L485.3,321.8L487.3,320L487.5,317.8L485.8,317.8L485.5,314.5L486.6,313.5L486.2,309.5L487.6,306.4L489.5,302.8L489.8,298.2L490,296.2L489.8,293.7L490.9,291L491.5,288.2L491.8,284.6L492.4,280.1L492.2,278.6ZM484.9,318L486.2,318.2L486,320.7L484.6,320.4ZM495.1,337.6L495.1,341.6L492.5,342.1L489.8,340.8L488.9,339.9L491.6,339.2L492,337.8L493.4,337.4ZM492.5,342.3L496.2,342.1L497.4,343.2L494.4,343Z"><title>CHL</title></path></g></svg>
<svg class="abs" style="left:270px;top:75px" width="48" height="126" viewBox="270 75 48 126">
<g fill="#0a4a0d"><rect x="284.4" y="79.3" width="17.6" height="55.4" rx="8.8"/><rect x="274.7" y="98.2" width="37.1" height="17.6" rx="8.8"/><rect x="284.4" y="141.1" width="17.6" height="55.2" rx="8.8"/></g>
<g fill="#fff"><path d="M293.2 83.5l5.2 8.3h-10.4z"/><path d="M293.2 130.5l5.2-8.3h-10.4z"/><path d="M277.6 107l8.3-5.2v10.4z"/><path d="M308.8 107l-8.3-5.2v10.4z"/>
<rect x="287.7" y="150.2" width="11" height="2.2"/><rect x="292.1" y="145.8" width="2.2" height="11"/><rect x="287.7" y="185" width="11" height="2.2"/></g>
<circle cx="293.2" cy="168.4" r="8.3" fill="#c9cdf2"/>
<g fill="none" stroke="#5a5fc0" stroke-width=".8"><circle cx="293.2" cy="168.4" r="8"/><ellipse cx="293.2" cy="168.4" rx="3.6" ry="8"/><ellipse cx="293.2" cy="168.4" rx="8" ry="3.4"/><path d="M293.2 160.4v16M285.2 168.4h16M287 163.5c4 2 8.500 2 12.400 0M287 173.300c4-2 8.500-2 12.400 0"/></g>
</svg>
<div class="abs" style="left:266px;top:414px;width:156px;height:20px;background:linear-gradient(90deg,#fff 0%,#d3e8d3 18%,#86bf86 45%,#3c933c 70%,#0a650a 88%,#004400 100%)"></div>
<div class="abs" style="left:266px;top:413.5px;font-size:11.8px;line-height:14px;color:#222">0</div>
<div class="abs" style="left:360px;top:413.5px;font-size:11.8px;line-height:14px;color:#0b200b;letter-spacing:.1px">78,232</div>


<div class="abs" id="tip">There are too many results to display, please provide more information</div>

<div class="abs" id="sepline"></div>
<div class="abs t13" style="left:277px;top:456px">Report View by Selection</div>
<div class="abs lnk" style="left:903px;top:455.8px;font-size:14.4px;white-space:nowrap;letter-spacing:.1px">Customize</div>

<div class="abs" id="thead"></div>
<div class="abs th" style="left:262px;top:486px;width:54px">Total:<br><span style="position:relative;left:-5px">5</span></div>
<div class="abs th" style="left:340px;top:494px;text-align:left">Research Fields</div>
<div class="abs th" style="left:474px;top:486px;width:120px">Web of Science<br><span style="position:relative;left:-5px">Documents</span></div>
<div class="abs th" style="left:628px;top:493.7px;text-align:left;color:#2c639b">Cites</div>
<svg class="abs" style="left:667px;top:499px" width="9" height="5" viewBox="0 0 9 5"><path d="M0 0H9L4.5 5Z" fill="#4a8fd6"/></svg>
<div class="abs th" style="left:731px;top:493.7px;text-align:left">Cites/Paper</div>
<div class="abs th" style="left:871px;top:493.7px;text-align:left">Top Papers</div>

<div class="abs row" style="top:522px;height:47px"></div>
<div class="abs row" style="top:569px;height:35px"></div>
<div class="abs row" style="top:604px;height:26px"></div>
<div class="abs row" style="top:630px;height:35px"></div>
<div class="abs row" style="top:665px;height:26px"></div>

<div class="abs num" style="left:236px;top:536px">1</div>
<div class="abs fld" style="top:524.5px;width:125px">PHARMACOLOG<br>Y &amp;<br>TOXICOLOGY</div>
<div class="abs num" style="left:513px;top:536px">2,047</div>
<div class="abs num" style="left:629px;top:536px">30,823</div>
<div class="abs num" style="left:751px;top:536px">15.06</div>
<div class="abs bar" style="top:535px"><b style="width:100%"></b><span style="color:#fff">50</span></div>

<div class="abs num" style="left:236px;top:577px">2</div>
<div class="abs fld" style="top:572.5px;width:125px">CLINICAL<br>MEDICINE</div>
<div class="abs num" style="left:513px;top:577px">2,745</div>
<div class="abs num" style="left:629px;top:577px">18,751</div>
<div class="abs num" style="left:751px;top:577px">6.83</div>
<div class="abs bar" style="top:576px"><b style="width:42%"></b><span>21</span></div>

<div class="abs num" style="left:236px;top:607px">3</div>
<div class="abs fld" style="top:609.5px;width:125px">CHEMISTRY</div>
<div class="abs num" style="left:513px;top:607px">851</div>
<div class="abs num" style="left:629px;top:607px">11,198</div>
<div class="abs num" style="left:751px;top:607px">13.16</div>
<div class="abs bar" style="top:607px"><b style="width:18%"></b><span>9</span></div>

<div class="abs num" style="left:236px;top:638px">4</div>
<div class="abs fld" style="top:633.5px;width:125px">BIOLOGY &amp;<br>BIOCHEMISTRY</div>
<div class="abs num" style="left:513px;top:638px">565</div>
<div class="abs num" style="left:629px;top:638px">6,926</div>
<div class="abs num" style="left:751px;top:638px">12.26</div>
<div class="abs bar" style="top:637px"><b style="width:26%"></b><span>13</span></div>

<div class="abs num" style="left:236px;top:668px">0</div>
<div class="abs fld" style="top:670.5px;width:125px">ALL FIELDS</div>
<div class="abs num" style="left:513px;top:668px">8,389</div>
<div class="abs num" style="left:629px;top:668px">95,599</div>
<div class="abs num" style="left:751px;top:668px">11.40</div>
<div class="abs bar" style="top:668px"><b style="width:100%"></b><span style="color:#fff">133</span></div>

</body>
</html>
